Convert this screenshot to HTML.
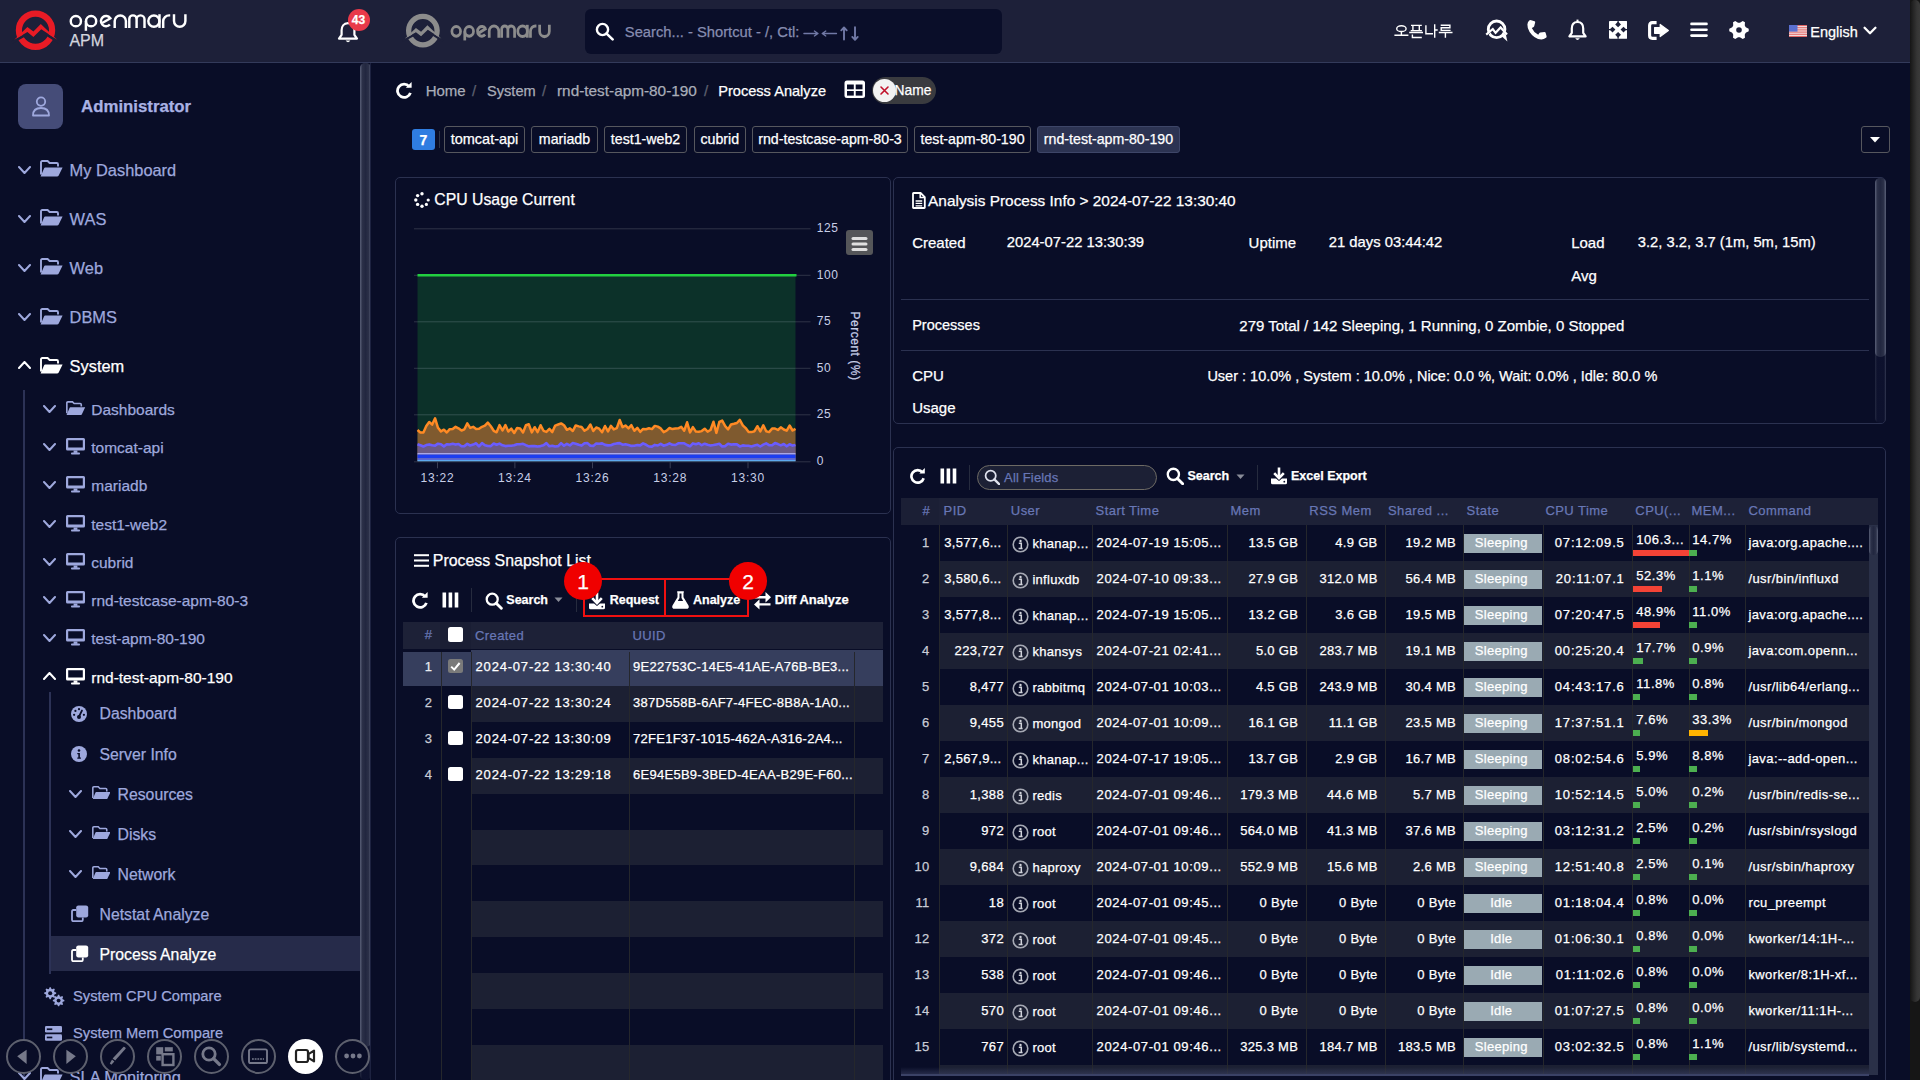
<!DOCTYPE html>
<html><head><meta charset="utf-8"><title>Process Analyze</title><style>
*{box-sizing:border-box}
html,body{margin:0;padding:0}
body{width:1920px;height:1080px;overflow:hidden;background:#090d27;font-family:"Liberation Sans",sans-serif;color:#fff;position:relative}
.a{position:absolute}
.nw{white-space:nowrap}
#hdr{left:0;top:0;width:1910px;height:63px;background:#1d2039;border-bottom:1px solid #333a5a}
#pscroll{left:1910px;top:0;width:10px;height:1080px;background:#161616}
#pthumb{left:1910px;top:0;width:10px;height:1002px;background:linear-gradient(90deg,#151515 0,#262626 35%,#353535 70%,#3a3a3a 100%);border-radius:5px}
#side{left:0;top:63px;width:370px;height:1017px;background:#090d27;overflow:hidden}
.sbthumb{background:linear-gradient(90deg,#4f556c 0,#2a2f47 25%,#232842 50%,#2a2f47 75%,#4f556c 100%);border-radius:5px}
.panel{border:1px solid #2b3150;border-radius:5px}
.t{font-size:15px;white-space:nowrap;line-height:1;-webkit-text-stroke:0.25px currentColor}

</style></head><body>
<div id="side" class="a"></div>
<div class="a" style="left:18px;top:84px;width:45px;height:45px;background:#454c78;border-radius:8px"></div>
<svg class="a" style="left:31px;top:96px;" width="20" height="21" viewBox="0 0 20 21"><circle cx="10" cy="5.6" r="4.2" fill="none" stroke="#9ea8dd" stroke-width="1.8"/><path d="M2,19.5 Q2,12 10,12 Q18,12 18,19.5 Z" fill="none" stroke="#9ea8dd" stroke-width="1.8" stroke-linejoin="round"/></svg>
<div class="a t" style="left:81.10px;top:98.88px;font-size:16.8px;color:#a9b2e4;font-weight:700;">Administrator</div>
<svg class="a" style="left:17.5px;top:165.7px;" width="13" height="8" viewBox="0 0 13 8"><polyline points="1,1 6.5,7 12,1" fill="none" stroke="#9ea8dd" stroke-width="2" stroke-linecap="round" stroke-linejoin="round"/></svg>
<svg class="a" style="left:40px;top:160.2px;" width="23.0" height="17.0" viewBox="0 0 23.0 17.0"><g transform="scale(1.0)" fill="#9ea8dd"><path d="M1,14.5 L1,2.3 Q1,1 2.3,1 L7.6,1 L9.6,3 L16.7,3 Q18,3 18,4.3 L18,6.6" fill="none" stroke="#9ea8dd" stroke-width="1.9"/><path d="M5.2,7.4 L22.6,7.4 L18.7,15.6 Q18.2,16.6 17,16.6 L0.6,16.6 L4,8.4 Q4.4,7.4 5.2,7.4 Z"/></g></svg>
<div class="a t" style="left:69.60px;top:161.82px;font-size:16.4px;color:#9ea8dd;">My Dashboard</div>
<svg class="a" style="left:17.5px;top:214.7px;" width="13" height="8" viewBox="0 0 13 8"><polyline points="1,1 6.5,7 12,1" fill="none" stroke="#9ea8dd" stroke-width="2" stroke-linecap="round" stroke-linejoin="round"/></svg>
<svg class="a" style="left:40px;top:209.2px;" width="23.0" height="17.0" viewBox="0 0 23.0 17.0"><g transform="scale(1.0)" fill="#9ea8dd"><path d="M1,14.5 L1,2.3 Q1,1 2.3,1 L7.6,1 L9.6,3 L16.7,3 Q18,3 18,4.3 L18,6.6" fill="none" stroke="#9ea8dd" stroke-width="1.9"/><path d="M5.2,7.4 L22.6,7.4 L18.7,15.6 Q18.2,16.6 17,16.6 L0.6,16.6 L4,8.4 Q4.4,7.4 5.2,7.4 Z"/></g></svg>
<div class="a t" style="left:69.60px;top:210.82px;font-size:16.4px;color:#9ea8dd;">WAS</div>
<svg class="a" style="left:17.5px;top:263.7px;" width="13" height="8" viewBox="0 0 13 8"><polyline points="1,1 6.5,7 12,1" fill="none" stroke="#9ea8dd" stroke-width="2" stroke-linecap="round" stroke-linejoin="round"/></svg>
<svg class="a" style="left:40px;top:258.2px;" width="23.0" height="17.0" viewBox="0 0 23.0 17.0"><g transform="scale(1.0)" fill="#9ea8dd"><path d="M1,14.5 L1,2.3 Q1,1 2.3,1 L7.6,1 L9.6,3 L16.7,3 Q18,3 18,4.3 L18,6.6" fill="none" stroke="#9ea8dd" stroke-width="1.9"/><path d="M5.2,7.4 L22.6,7.4 L18.7,15.6 Q18.2,16.6 17,16.6 L0.6,16.6 L4,8.4 Q4.4,7.4 5.2,7.4 Z"/></g></svg>
<div class="a t" style="left:69.60px;top:259.82px;font-size:16.4px;color:#9ea8dd;">Web</div>
<svg class="a" style="left:17.5px;top:313px;" width="13" height="8" viewBox="0 0 13 8"><polyline points="1,1 6.5,7 12,1" fill="none" stroke="#9ea8dd" stroke-width="2" stroke-linecap="round" stroke-linejoin="round"/></svg>
<svg class="a" style="left:40px;top:307.5px;" width="23.0" height="17.0" viewBox="0 0 23.0 17.0"><g transform="scale(1.0)" fill="#9ea8dd"><path d="M1,14.5 L1,2.3 Q1,1 2.3,1 L7.6,1 L9.6,3 L16.7,3 Q18,3 18,4.3 L18,6.6" fill="none" stroke="#9ea8dd" stroke-width="1.9"/><path d="M5.2,7.4 L22.6,7.4 L18.7,15.6 Q18.2,16.6 17,16.6 L0.6,16.6 L4,8.4 Q4.4,7.4 5.2,7.4 Z"/></g></svg>
<div class="a t" style="left:69.60px;top:309.12px;font-size:16.4px;color:#9ea8dd;">DBMS</div>
<svg class="a" style="left:17.5px;top:361px;" width="13" height="8" viewBox="0 0 13 8"><polyline points="1,7 6.5,1 12,7" fill="none" stroke="#fff" stroke-width="2" stroke-linecap="round" stroke-linejoin="round"/></svg>
<svg class="a" style="left:40px;top:356.5px;" width="23.0" height="17.0" viewBox="0 0 23.0 17.0"><g transform="scale(1.0)" fill="#fff"><path d="M1,14.5 L1,2.3 Q1,1 2.3,1 L7.6,1 L9.6,3 L16.7,3 Q18,3 18,4.3 L18,6.6" fill="none" stroke="#fff" stroke-width="1.9"/><path d="M5.2,7.4 L22.6,7.4 L18.7,15.6 Q18.2,16.6 17,16.6 L0.6,16.6 L4,8.4 Q4.4,7.4 5.2,7.4 Z"/></g></svg>
<div class="a t" style="left:69.60px;top:358.12px;font-size:16.4px;color:#fff;">System</div>
<div class="a" style="left:23px;top:389.5px;width:2px;height:700px;background:#2c3256"></div>
<svg class="a" style="left:42.8px;top:405px;" width="13" height="8" viewBox="0 0 13 8"><polyline points="1,1 6.5,7 12,1" fill="none" stroke="#9ea8dd" stroke-width="2" stroke-linecap="round" stroke-linejoin="round"/></svg>
<svg class="a" style="left:66px;top:400.5px;" width="19.55" height="14.45" viewBox="0 0 19.55 14.45"><g transform="scale(0.85)" fill="#9ea8dd"><path d="M1,14.5 L1,2.3 Q1,1 2.3,1 L7.6,1 L9.6,3 L16.7,3 Q18,3 18,4.3 L18,6.6" fill="none" stroke="#9ea8dd" stroke-width="1.9"/><path d="M5.2,7.4 L22.6,7.4 L18.7,15.6 Q18.2,16.6 17,16.6 L0.6,16.6 L4,8.4 Q4.4,7.4 5.2,7.4 Z"/></g></svg>
<div class="a t" style="left:91.25px;top:401.88px;font-size:15.5px;color:#9ea8dd;">Dashboards</div>
<svg class="a" style="left:42.8px;top:443.25px;" width="13" height="8" viewBox="0 0 13 8"><polyline points="1,1 6.5,7 12,1" fill="none" stroke="#9ea8dd" stroke-width="2" stroke-linecap="round" stroke-linejoin="round"/></svg>
<svg class="a" style="left:66.3px;top:438.25px;" width="19.0" height="17.0" viewBox="0 0 19.0 17.0"><g transform="scale(1.0)" fill="#9ea8dd"><path fill-rule="evenodd" d="M1.5,0 L17.5,0 Q19,0 19,1.5 L19,11 Q19,12.5 17.5,12.5 L1.5,12.5 Q0,12.5 0,11 L0,1.5 Q0,0 1.5,0 Z M2.2,2.2 L2.2,9.6 L16.8,9.6 L16.8,2.2 Z"/><rect x="7.6" y="12.5" width="3.8" height="2.4"/><rect x="5" y="14.6" width="9" height="2" rx="0.8"/></g></svg>
<div class="a t" style="left:91.25px;top:440.13px;font-size:15.5px;color:#9ea8dd;">tomcat-api</div>
<svg class="a" style="left:42.8px;top:481.25px;" width="13" height="8" viewBox="0 0 13 8"><polyline points="1,1 6.5,7 12,1" fill="none" stroke="#9ea8dd" stroke-width="2" stroke-linecap="round" stroke-linejoin="round"/></svg>
<svg class="a" style="left:66.3px;top:476.25px;" width="19.0" height="17.0" viewBox="0 0 19.0 17.0"><g transform="scale(1.0)" fill="#9ea8dd"><path fill-rule="evenodd" d="M1.5,0 L17.5,0 Q19,0 19,1.5 L19,11 Q19,12.5 17.5,12.5 L1.5,12.5 Q0,12.5 0,11 L0,1.5 Q0,0 1.5,0 Z M2.2,2.2 L2.2,9.6 L16.8,9.6 L16.8,2.2 Z"/><rect x="7.6" y="12.5" width="3.8" height="2.4"/><rect x="5" y="14.6" width="9" height="2" rx="0.8"/></g></svg>
<div class="a t" style="left:91.25px;top:478.13px;font-size:15.5px;color:#9ea8dd;">mariadb</div>
<svg class="a" style="left:42.8px;top:520px;" width="13" height="8" viewBox="0 0 13 8"><polyline points="1,1 6.5,7 12,1" fill="none" stroke="#9ea8dd" stroke-width="2" stroke-linecap="round" stroke-linejoin="round"/></svg>
<svg class="a" style="left:66.3px;top:515px;" width="19.0" height="17.0" viewBox="0 0 19.0 17.0"><g transform="scale(1.0)" fill="#9ea8dd"><path fill-rule="evenodd" d="M1.5,0 L17.5,0 Q19,0 19,1.5 L19,11 Q19,12.5 17.5,12.5 L1.5,12.5 Q0,12.5 0,11 L0,1.5 Q0,0 1.5,0 Z M2.2,2.2 L2.2,9.6 L16.8,9.6 L16.8,2.2 Z"/><rect x="7.6" y="12.5" width="3.8" height="2.4"/><rect x="5" y="14.6" width="9" height="2" rx="0.8"/></g></svg>
<div class="a t" style="left:91.25px;top:516.88px;font-size:15.5px;color:#9ea8dd;">test1-web2</div>
<svg class="a" style="left:42.8px;top:558px;" width="13" height="8" viewBox="0 0 13 8"><polyline points="1,1 6.5,7 12,1" fill="none" stroke="#9ea8dd" stroke-width="2" stroke-linecap="round" stroke-linejoin="round"/></svg>
<svg class="a" style="left:66.3px;top:553px;" width="19.0" height="17.0" viewBox="0 0 19.0 17.0"><g transform="scale(1.0)" fill="#9ea8dd"><path fill-rule="evenodd" d="M1.5,0 L17.5,0 Q19,0 19,1.5 L19,11 Q19,12.5 17.5,12.5 L1.5,12.5 Q0,12.5 0,11 L0,1.5 Q0,0 1.5,0 Z M2.2,2.2 L2.2,9.6 L16.8,9.6 L16.8,2.2 Z"/><rect x="7.6" y="12.5" width="3.8" height="2.4"/><rect x="5" y="14.6" width="9" height="2" rx="0.8"/></g></svg>
<div class="a t" style="left:91.25px;top:554.88px;font-size:15.5px;color:#9ea8dd;">cubrid</div>
<svg class="a" style="left:42.8px;top:596.25px;" width="13" height="8" viewBox="0 0 13 8"><polyline points="1,1 6.5,7 12,1" fill="none" stroke="#9ea8dd" stroke-width="2" stroke-linecap="round" stroke-linejoin="round"/></svg>
<svg class="a" style="left:66.3px;top:591.25px;" width="19.0" height="17.0" viewBox="0 0 19.0 17.0"><g transform="scale(1.0)" fill="#9ea8dd"><path fill-rule="evenodd" d="M1.5,0 L17.5,0 Q19,0 19,1.5 L19,11 Q19,12.5 17.5,12.5 L1.5,12.5 Q0,12.5 0,11 L0,1.5 Q0,0 1.5,0 Z M2.2,2.2 L2.2,9.6 L16.8,9.6 L16.8,2.2 Z"/><rect x="7.6" y="12.5" width="3.8" height="2.4"/><rect x="5" y="14.6" width="9" height="2" rx="0.8"/></g></svg>
<div class="a t" style="left:91.25px;top:593.13px;font-size:15.5px;color:#9ea8dd;">rnd-testcase-apm-80-3</div>
<svg class="a" style="left:42.8px;top:634.25px;" width="13" height="8" viewBox="0 0 13 8"><polyline points="1,1 6.5,7 12,1" fill="none" stroke="#9ea8dd" stroke-width="2" stroke-linecap="round" stroke-linejoin="round"/></svg>
<svg class="a" style="left:66.3px;top:629.25px;" width="19.0" height="17.0" viewBox="0 0 19.0 17.0"><g transform="scale(1.0)" fill="#9ea8dd"><path fill-rule="evenodd" d="M1.5,0 L17.5,0 Q19,0 19,1.5 L19,11 Q19,12.5 17.5,12.5 L1.5,12.5 Q0,12.5 0,11 L0,1.5 Q0,0 1.5,0 Z M2.2,2.2 L2.2,9.6 L16.8,9.6 L16.8,2.2 Z"/><rect x="7.6" y="12.5" width="3.8" height="2.4"/><rect x="5" y="14.6" width="9" height="2" rx="0.8"/></g></svg>
<div class="a t" style="left:91.25px;top:631.13px;font-size:15.5px;color:#9ea8dd;">test-apm-80-190</div>
<svg class="a" style="left:42.8px;top:672px;" width="13" height="8" viewBox="0 0 13 8"><polyline points="1,7 6.5,1 12,7" fill="none" stroke="#fff" stroke-width="2" stroke-linecap="round" stroke-linejoin="round"/></svg>
<svg class="a" style="left:66.3px;top:668px;" width="19.0" height="17.0" viewBox="0 0 19.0 17.0"><g transform="scale(1.0)" fill="#fff"><path fill-rule="evenodd" d="M1.5,0 L17.5,0 Q19,0 19,1.5 L19,11 Q19,12.5 17.5,12.5 L1.5,12.5 Q0,12.5 0,11 L0,1.5 Q0,0 1.5,0 Z M2.2,2.2 L2.2,9.6 L16.8,9.6 L16.8,2.2 Z"/><rect x="7.6" y="12.5" width="3.8" height="2.4"/><rect x="5" y="14.6" width="9" height="2" rx="0.8"/></g></svg>
<div class="a t" style="left:91.25px;top:669.88px;font-size:15.5px;color:#fff;">rnd-test-apm-80-190</div>
<div class="a" style="left:49px;top:692px;width:2px;height:282px;background:#2c3256"></div>
<svg class="a" style="left:71.3px;top:706px;" width="16" height="16" viewBox="0 0 16 16"><circle cx="8" cy="8" r="8" fill="#9ea8dd"/><circle cx="8" cy="3.2" r="1.1" fill="#090d27"/><circle cx="4.4" cy="4.9" r="1.1" fill="#090d27"/><circle cx="3.1" cy="8.8" r="1.1" fill="#090d27"/><circle cx="12.9" cy="8.8" r="1.1" fill="#090d27"/><path d="M8,10.5 L11,4.5" stroke="#090d27" stroke-width="1.7" stroke-linecap="round"/><circle cx="8" cy="11" r="2" fill="#090d27"/></svg>
<div class="a t" style="left:99.50px;top:706.13px;font-size:15.8px;color:#9ea8dd;">Dashboard</div>
<svg class="a" style="left:71.3px;top:746px;" width="16" height="16" viewBox="0 0 16 16"><circle cx="8" cy="8" r="8" fill="#9ea8dd"/><circle cx="8" cy="4.5" r="1.3" fill="#090d27"/><path d="M6.3,6.9 L8.9,6.9 L8.9,11.4 L9.9,11.4 L9.9,12.7 L6.3,12.7 L6.3,11.4 L7.3,11.4 L7.3,8.2 L6.3,8.2 Z" fill="#090d27"/></svg>
<div class="a t" style="left:99.50px;top:746.63px;font-size:15.8px;color:#9ea8dd;">Server Info</div>
<svg class="a" style="left:69.2px;top:790px;" width="13" height="8" viewBox="0 0 13 8"><polyline points="1,1 6.5,7 12,1" fill="none" stroke="#9ea8dd" stroke-width="2" stroke-linecap="round" stroke-linejoin="round"/></svg>
<svg class="a" style="left:91.5px;top:785.5px;" width="18.86" height="13.94" viewBox="0 0 18.86 13.94"><g transform="scale(0.82)" fill="#9ea8dd"><path d="M1,14.5 L1,2.3 Q1,1 2.3,1 L7.6,1 L9.6,3 L16.7,3 Q18,3 18,4.3 L18,6.6" fill="none" stroke="#9ea8dd" stroke-width="1.9"/><path d="M5.2,7.4 L22.6,7.4 L18.7,15.6 Q18.2,16.6 17,16.6 L0.6,16.6 L4,8.4 Q4.4,7.4 5.2,7.4 Z"/></g></svg>
<div class="a t" style="left:117.50px;top:786.63px;font-size:15.8px;color:#9ea8dd;">Resources</div>
<svg class="a" style="left:69.2px;top:830px;" width="13" height="8" viewBox="0 0 13 8"><polyline points="1,1 6.5,7 12,1" fill="none" stroke="#9ea8dd" stroke-width="2" stroke-linecap="round" stroke-linejoin="round"/></svg>
<svg class="a" style="left:91.5px;top:825.5px;" width="18.86" height="13.94" viewBox="0 0 18.86 13.94"><g transform="scale(0.82)" fill="#9ea8dd"><path d="M1,14.5 L1,2.3 Q1,1 2.3,1 L7.6,1 L9.6,3 L16.7,3 Q18,3 18,4.3 L18,6.6" fill="none" stroke="#9ea8dd" stroke-width="1.9"/><path d="M5.2,7.4 L22.6,7.4 L18.7,15.6 Q18.2,16.6 17,16.6 L0.6,16.6 L4,8.4 Q4.4,7.4 5.2,7.4 Z"/></g></svg>
<div class="a t" style="left:117.50px;top:826.63px;font-size:15.8px;color:#9ea8dd;">Disks</div>
<svg class="a" style="left:69.2px;top:870px;" width="13" height="8" viewBox="0 0 13 8"><polyline points="1,1 6.5,7 12,1" fill="none" stroke="#9ea8dd" stroke-width="2" stroke-linecap="round" stroke-linejoin="round"/></svg>
<svg class="a" style="left:91.5px;top:865.5px;" width="18.86" height="13.94" viewBox="0 0 18.86 13.94"><g transform="scale(0.82)" fill="#9ea8dd"><path d="M1,14.5 L1,2.3 Q1,1 2.3,1 L7.6,1 L9.6,3 L16.7,3 Q18,3 18,4.3 L18,6.6" fill="none" stroke="#9ea8dd" stroke-width="1.9"/><path d="M5.2,7.4 L22.6,7.4 L18.7,15.6 Q18.2,16.6 17,16.6 L0.6,16.6 L4,8.4 Q4.4,7.4 5.2,7.4 Z"/></g></svg>
<div class="a t" style="left:117.50px;top:866.63px;font-size:15.8px;color:#9ea8dd;">Network</div>
<svg class="a" style="left:71px;top:905px;" width="18" height="17" viewBox="0 0 18 17"><path d="M5.2,5 L2.4,5 Q1,5 1,6.4 L1,14.8 Q1,16.2 2.4,16.2 L10.4,16.2 Q11.8,16.2 11.8,14.8 L11.8,12.6" fill="none" stroke="#9ea8dd" stroke-width="1.8"/><rect x="5.2" y="0.4" width="12" height="12" rx="2.2" fill="#9ea8dd"/></svg>
<div class="a t" style="left:99.50px;top:906.63px;font-size:15.8px;color:#9ea8dd;">Netstat Analyze</div>
<div class="a" style="left:51px;top:936px;width:309px;height:34.5px;background:#262b4a"></div>
<svg class="a" style="left:71px;top:945px;" width="18" height="17" viewBox="0 0 18 17"><path d="M5.2,5 L2.4,5 Q1,5 1,6.4 L1,14.8 Q1,16.2 2.4,16.2 L10.4,16.2 Q11.8,16.2 11.8,14.8 L11.8,12.6" fill="none" stroke="#fff" stroke-width="1.8"/><rect x="5.2" y="0.4" width="12" height="12" rx="2.2" fill="#fff"/></svg>
<div class="a t" style="left:99.50px;top:946.63px;font-size:15.8px;color:#fff;">Process Analyze</div>
<svg class="a" style="left:43.5px;top:987px;" width="21" height="20" viewBox="0 0 21 20"><polygon points="12.17,5.61 12.17,6.79 10.45,7.49 10.12,8.29 10.84,10.01 10.01,10.84 8.29,10.12 7.49,10.45 6.79,12.17 5.61,12.17 4.91,10.45 4.11,10.12 2.39,10.84 1.56,10.01 2.28,8.29 1.95,7.49 0.23,6.79 0.23,5.61 1.95,4.91 2.28,4.11 1.56,2.39 2.39,1.56 4.11,2.28 4.91,1.95 5.61,0.23 6.79,0.23 7.49,1.95 8.29,2.28 10.01,1.56 10.84,2.39 10.12,4.11 10.45,4.91" fill="#9ea8dd"/><circle cx="6.2" cy="6.2" r="2.04" fill="#090d27"/><polygon points="20.37,13.03 20.37,14.17 18.71,14.85 18.39,15.62 19.08,17.28 18.28,18.08 16.62,17.39 15.85,17.71 15.17,19.37 14.03,19.37 13.35,17.71 12.58,17.39 10.92,18.08 10.12,17.28 10.81,15.62 10.49,14.85 8.83,14.17 8.83,13.03 10.49,12.35 10.81,11.58 10.12,9.92 10.92,9.12 12.58,9.81 13.35,9.49 14.03,7.83 15.17,7.83 15.85,9.49 16.62,9.81 18.28,9.12 19.08,9.92 18.39,11.58 18.71,12.35" fill="#9ea8dd"/><circle cx="14.6" cy="13.6" r="1.97" fill="#090d27"/></svg>
<div class="a t" style="left:73.00px;top:988.81px;font-size:14.7px;color:#9ea8dd;">System CPU Compare</div>
<svg class="a" style="left:45px;top:1026px;" width="17" height="15" viewBox="0 0 17 15"><rect x="0" y="0" width="17" height="6.5" rx="1.3" fill="#9ea8dd"/><rect x="0" y="8.2" width="17" height="6.5" rx="1.3" fill="#9ea8dd"/><rect x="1.8" y="2.4" width="5.5" height="1.7" fill="#090d27"/><rect x="1.8" y="10.6" width="5.5" height="1.7" fill="#090d27"/></svg>
<div class="a t" style="left:73.00px;top:1026.31px;font-size:14.7px;color:#9ea8dd;">System Mem Compare</div>
<svg class="a" style="left:17.5px;top:1071.5px;" width="13" height="8" viewBox="0 0 13 8"><polyline points="1,1 6.5,7 12,1" fill="none" stroke="#9ea8dd" stroke-width="2" stroke-linecap="round" stroke-linejoin="round"/></svg>
<svg class="a" style="left:40px;top:1066.5px;" width="23.0" height="17.0" viewBox="0 0 23.0 17.0"><g transform="scale(1.0)" fill="#9ea8dd"><path d="M1,14.5 L1,2.3 Q1,1 2.3,1 L7.6,1 L9.6,3 L16.7,3 Q18,3 18,4.3 L18,6.6" fill="none" stroke="#9ea8dd" stroke-width="1.9"/><path d="M5.2,7.4 L22.6,7.4 L18.7,15.6 Q18.2,16.6 17,16.6 L0.6,16.6 L4,8.4 Q4.4,7.4 5.2,7.4 Z"/></g></svg>
<div class="a t" style="left:69.60px;top:1068.62px;font-size:16.4px;color:#9ea8dd;">SLA Monitoring</div>
<div class="a" style="left:360px;top:63px;width:10.5px;height:1017px;background:linear-gradient(90deg,#30354c 0,#0f1330 20%,#0f1330 80%,#30354c 100%);border-radius:5px;opacity:.7"></div>
<div class="a" style="left:360px;top:63px;width:10.5px;height:984px;background:linear-gradient(90deg,#5a6078 0,#2b3048 22%,#222740 50%,#2b3048 78%,#5a6078 100%);border-radius:5px"></div>
<div class="a" style="left:370px;top:63px;width:1px;height:1017px;background:#1d2240"></div>
<div class="a" style="left:6.25px;top:1038.75px;width:35px;height:35px;border:2px solid #5d606e;border-radius:50%;background:#090d27"></div>
<div class="a" style="left:52.5px;top:1038.75px;width:35px;height:35px;border:2px solid #5d606e;border-radius:50%;background:#090d27"></div>
<div class="a" style="left:100.0px;top:1038.75px;width:35px;height:35px;border:2px solid #5d606e;border-radius:50%;background:#090d27"></div>
<div class="a" style="left:147.0px;top:1038.75px;width:35px;height:35px;border:2px solid #5d606e;border-radius:50%;background:#090d27"></div>
<div class="a" style="left:193.75px;top:1038.75px;width:35px;height:35px;border:2px solid #5d606e;border-radius:50%;background:#090d27"></div>
<div class="a" style="left:240.75px;top:1038.75px;width:35px;height:35px;border:2px solid #5d606e;border-radius:50%;background:#090d27"></div>
<div class="a" style="left:287.5px;top:1038.75px;width:35px;height:35px;background:#fff;border-radius:50%"></div>
<div class="a" style="left:335.0px;top:1038.75px;width:35px;height:35px;border:2px solid #5d606e;border-radius:50%;background:#090d27"></div>
<svg class="a" style="left:13px;top:1046px;" width="20" height="20" viewBox="0 0 20 20"><path d="M4.2,10.2 L13.6,3.8 L13.6,18 Z" fill="#76798a"/></svg>
<svg class="a" style="left:60px;top:1046px;" width="20" height="20" viewBox="0 0 20 20"><path d="M15.8,10.2 L6.4,3.8 L6.4,18 Z" fill="#76798a"/></svg>
<svg class="a" style="left:106px;top:1045px;" width="22" height="22" viewBox="0 0 22 22"><path d="M17.6,1.8 Q19.4,1.6 19.8,3.6 L9.2,15.6 L6.6,13.6 Z" fill="#76798a"/><path d="M6,14.6 L8.4,16.4 L5.4,19.8 L3.8,18.6 Z" fill="#76798a"/></svg>
<svg class="a" style="left:153px;top:1045px;" width="22" height="22" viewBox="0 0 22 22"><rect x="3.2" y="2.2" width="7" height="7.2" fill="#76798a"/><rect x="3.2" y="10.8" width="4.6" height="4.8" fill="#76798a"/><rect x="11.8" y="2.2" width="8" height="4.2" fill="#76798a"/><rect x="9.6" y="9.2" width="10.8" height="10.8" fill="none" stroke="#76798a" stroke-width="2.4"/></svg>
<svg class="a" style="left:200px;top:1045px;" width="22" height="22" viewBox="0 0 22 22"><circle cx="9" cy="9" r="6.2" fill="none" stroke="#76798a" stroke-width="2.8"/><path d="M13.6,13.6 L19.4,19.4" stroke="#76798a" stroke-width="3.4" stroke-linecap="round"/></svg>
<svg class="a" style="left:247px;top:1045px;" width="22" height="22" viewBox="0 0 22 22"><rect x="2" y="4.4" width="18" height="13.6" rx="1.6" fill="none" stroke="#76798a" stroke-width="1.9"/><path d="M5,14 H17" stroke="#76798a" stroke-width="1.5" stroke-dasharray="1.8,0.9"/></svg>
<svg class="a" style="left:294px;top:1045px;" width="22" height="22" viewBox="0 0 22 22"><rect x="2" y="5" width="12" height="12" rx="2" fill="none" stroke="#222" stroke-width="2.2"/><path d="M14.5,9.2 L20,5.6 L20,16.4 L14.5,12.8 Z" fill="none" stroke="#222" stroke-width="2.2" stroke-linejoin="round"/></svg>
<svg class="a" style="left:341.5px;top:1045px;" width="22" height="22" viewBox="0 0 22 22"><circle cx="4.6" cy="11" r="2.4" fill="#76798a"/><circle cx="11" cy="11" r="2.4" fill="#76798a"/><circle cx="17.4" cy="11" r="2.4" fill="#76798a"/></svg>
<div id="hdr" class="a"></div>
<svg class="a" style="left:10px;top:5px;" width="50" height="50" viewBox="0 0 50 50"><circle cx="25.5" cy="25.2" r="16.6" fill="none" stroke="#e81b25" stroke-width="6.2"/>
<polyline points="2,37.4 17.4,28.9 23.4,33.7 31.25,26.1 49,37.4" fill="none" stroke="#1d2039" stroke-width="2.6"/>
<polygon points="4.3,34.7 17.4,22 23.4,26.4 30.8,19 47.2,34.7 31.25,24.3 23.4,31.9 17.4,27.1" fill="#e81b25"/></svg>
<svg class="a" style="left:65px;top:8px;" width="125" height="26" viewBox="0 0 125 26"><g fill="none" stroke="#ffffff" stroke-width="2.45" stroke-linecap="butt">
<circle cx="10.85" cy="13.15" r="5.1"/>
<circle cx="26.1" cy="13.15" r="5.1"/><path d="M20.9,13.15 V22.8"/>
<path d="M45.18,10.22 A5.1,5.1 0 1 0 44.9,16.43"/><path d="M37.2,15.0 L46.4,9.8"/>
<path d="M49.7,19.9 V13.0 A5.6,5.6 0 0 1 60.9,13.0 V19.9"/>
<path d="M64.3,19.9 V11.0 A3.65,3.65 0 0 1 71.6,11.0 V19.9 M71.6,11.3 A3.95,3.95 0 0 1 79.5,11.3 V19.9"/>
<circle cx="88.9" cy="13.1" r="5.6"/><path d="M94.5,6.2 V19.9"/>
<path d="M98.2,19.9 V13.35 A6,6 0 0 1 104.2,7.35 H105.2"/>
<path d="M109,6.2 V13.05 A5.7,5.7 0 0 0 120.4,13.05 V6.2"/>
</g></svg>
<div class="a t" style="left:69.40px;top:32.76px;font-size:16px;color:#d3d5de;">APM</div>
<svg class="a" style="left:337px;top:20px;" width="22" height="25" viewBox="0 0 22 25"><path d="M11,3.2 C6.6,3.2 4.6,6.6 4.6,10.3 L4.6,14.8 L2,18.6 L20,18.6 L17.4,14.8 L17.4,10.3 C17.4,6.6 15.4,3.2 11,3.2 Z" fill="none" stroke="#fff" stroke-width="2.2" stroke-linejoin="round"/><path d="M8.6,20.6 Q11,24 13.4,20.6 Z" fill="#fff"/></svg>
<div class="a" style="left:347.5px;top:8.5px;width:22px;height:22px;background:#e8394a;border-radius:11px"></div>
<div class="a t" style="left:58.50px;width:600px;text-align:center;top:14.44px;font-size:12px;color:#fff;font-weight:700;">43</div>
<svg class="a" style="left:401.1px;top:9.28px;" width="43" height="43" viewBox="0 0 43 43"><g transform="scale(0.858)"><circle cx="25.5" cy="25.2" r="16.6" fill="none" stroke="#8c8c8c" stroke-width="6.2"/>
<polyline points="2,37.4 17.4,28.9 23.4,33.7 31.25,26.1 49,37.4" fill="none" stroke="#1d2039" stroke-width="2.6"/>
<polygon points="4.3,34.7 17.4,22 23.4,26.4 30.8,19 47.2,34.7 31.25,24.3 23.4,31.9 17.4,27.1" fill="#8c8c8c"/></g></svg>
<svg class="a" style="left:447.4px;top:19.2px;" width="110" height="26" viewBox="0 0 110 26"><g transform="scale(0.85,0.94)"><g fill="none" stroke="#8c8c8c" stroke-width="3.2" stroke-linecap="butt">
<circle cx="10.85" cy="13.15" r="5.1"/>
<circle cx="26.1" cy="13.15" r="5.1"/><path d="M20.9,13.15 V22.8"/>
<path d="M45.18,10.22 A5.1,5.1 0 1 0 44.9,16.43"/><path d="M37.2,15.0 L46.4,9.8"/>
<path d="M49.7,19.9 V13.0 A5.6,5.6 0 0 1 60.9,13.0 V19.9"/>
<path d="M64.3,19.9 V11.0 A3.65,3.65 0 0 1 71.6,11.0 V19.9 M71.6,11.3 A3.95,3.95 0 0 1 79.5,11.3 V19.9"/>
<circle cx="88.9" cy="13.1" r="5.6"/><path d="M94.5,6.2 V19.9"/>
<path d="M98.2,19.9 V13.35 A6,6 0 0 1 104.2,7.35 H105.2"/>
<path d="M109,6.2 V13.05 A5.7,5.7 0 0 0 120.4,13.05 V6.2"/>
</g></g></svg>
<div class="a" style="left:585px;top:9px;width:417px;height:45px;background:#0a0e29;border-radius:6px"></div>
<svg class="a" style="left:595px;top:22px;" width="20" height="19" viewBox="0 0 20 19"><circle cx="7.5" cy="7.5" r="5.6" fill="none" stroke="#fff" stroke-width="2.4"/><path d="M11.6,11.6 L17.6,17.4" stroke="#fff" stroke-width="2.6" stroke-linecap="round"/></svg>
<div class="a t" style="left:624.80px;top:24.71px;font-size:14.75px;color:#868cb0;">Search... - Shortcut - /, Ctl:</div>
<svg class="a" style="left:800px;top:24px;" width="60" height="18" viewBox="0 0 60 18"><g fill="none" stroke="#7179a6" stroke-width="1.3" stroke-linecap="round" stroke-linejoin="round"><path d="M3.9,9.5 H18 M14.4,7 L18,9.5 L14.4,12"/><path d="M22.2,9.5 H36.5 M25.8,7 L22.2,9.5 L25.8,12"/></g><g fill="none" stroke="#7179a6" stroke-width="1.9" stroke-linecap="round" stroke-linejoin="round"><path d="M44,3.6 V15.6 M41.3,6.3 L44,3.4 L46.7,6.3"/><path d="M55,3.2 V15.6 M52.3,12.9 L55,15.8 L57.7,12.9"/></g></svg>
<svg class="a" style="left:0px;top:0px;" width="1460" height="45" viewBox="0 0 1460 45"><g fill="none" stroke="#fff" stroke-width="1.4">
<ellipse cx="1401.4" cy="28.65" rx="4.7" ry="2.9"/>
<path d="M1401.4,31.6 V35.2 M1394.4,35.3 H1408.4"/>
<path d="M1411,25.4 H1421.8 M1412.9,25.4 V30.6 M1419.3,25.4 V30.6 M1410.7,30.6 H1421.9 M1409.2,32.5 H1423 M1412.4,34.4 V37.5 H1421.8"/>
<path d="M1425.9,25.3 V33.75 H1433 M1434.7,24.2 V37.7 M1434.7,30 H1437.7"/>
<path d="M1440.7,25.3 H1449.9 V27.8 H1441.2 V30.4 H1450.6 M1438.8,32.5 H1452.5 M1445.4,32.5 V37.7"/>
</g></svg>
<svg class="a" style="left:1484px;top:17px;" width="26" height="27" viewBox="0 0 26 27"><circle cx="12.6" cy="12.3" r="8.3" fill="none" stroke="#fff" stroke-width="2.9"/><polyline points="1.5,19.6 8.8,12 11.6,15.8 16.6,10.4 24.5,19.6" fill="none" stroke="#1d2039" stroke-width="1.6"/><polyline points="2.2,17.6 8.8,12 11.6,15.8 16.6,10.4 23,17.6" fill="none" stroke="#fff" stroke-width="2.2" stroke-linejoin="miter"/><path d="M16.8,18.6 L23.4,24.6 L21.6,16.6 Z" fill="#fff"/></svg>
<svg class="a" style="left:1526px;top:19px;" width="22" height="22" viewBox="0 0 22 22"><path d="M5.2,1.2 L8.6,2.2 Q9.4,2.5 9.2,3.3 L8.2,7.2 Q8,7.8 7.3,8.2 L5.8,9 Q7.8,13.6 12.2,15.8 L13.2,14.3 Q13.6,13.7 14.3,13.6 L18.5,13 Q19.4,13 19.6,13.8 L20.6,17.2 Q20.8,18.2 20,18.8 Q17.8,20.6 15.4,20.6 Q8.4,20.2 3.6,13 Q1.2,9 1.4,5.4 Q1.6,3 3.2,1.6 Q4.1,0.9 5.2,1.2 Z" fill="#fff"/></svg>
<svg class="a" style="left:1567px;top:19.3px;" width="21" height="23" viewBox="0 0 21 23"><path d="M10.5,3 C6.6,3 4.8,6 4.8,9.6 L4.8,13.8 L2.4,17.4 L18.6,17.4 L16.2,13.8 L16.2,9.6 C16.2,6 14.4,3 10.5,3 Z" fill="none" stroke="#fff" stroke-width="2.2" stroke-linejoin="round"/><path d="M8.2,19.2 Q10.5,22.6 12.8,19.2 Z" fill="#fff"/><rect x="9.5" y="0.6" width="2" height="3" fill="#fff"/></svg>
<svg class="a" style="left:1609px;top:21px;" width="18.2" height="17.8" viewBox="0 0 18.2 17.8"><rect x="0" y="0" width="18.2" height="17.8" rx="0.8" fill="#fff"/><polygon points="9.1,0.5 12.0,3.4 9.1,6.3 6.199999999999999,3.4" fill="#1d2039"/><polygon points="3.5,5.699999999999999 6.4,8.6 3.5,11.5 0.6000000000000001,8.6" fill="#1d2039"/><polygon points="14.5,5.699999999999999 17.4,8.6 14.5,11.5 11.6,8.6" fill="#1d2039"/><polygon points="9.1,10.9 12.0,13.8 9.1,16.7 6.199999999999999,13.8" fill="#1d2039"/><rect x="8.5" y="0" width="1.2" height="2" fill="#1d2039"/><rect x="8.5" y="15.2" width="1.2" height="2.6" fill="#1d2039"/><rect x="0" y="8" width="2" height="1.2" fill="#1d2039"/><rect x="16" y="8" width="2.2" height="1.2" fill="#1d2039"/></svg>
<svg class="a" style="left:1648px;top:20.5px;" width="22" height="19" viewBox="0 0 22 19"><path d="M8.6,1.6 L4.4,1.6 Q1.6,1.6 1.6,4.4 L1.6,14.6 Q1.6,17.4 4.4,17.4 L8.6,17.4" fill="none" stroke="#fff" stroke-width="3.1"/><path d="M6.6,6.5 L12.2,6.5 L12.2,3.4 L20.4,9.5 L12.2,15.6 L12.2,12.3 L6.6,12.3 Z" fill="#fff" stroke="#fff" stroke-width="1.2" stroke-linejoin="round"/></svg>
<svg class="a" style="left:1689px;top:21px;" width="20" height="18" viewBox="0 0 20 18"><g stroke="#fff" stroke-width="2.6" stroke-linecap="round"><path d="M2.5,2.9 H17.5"/><path d="M2.5,8.7 H17.5"/><path d="M2.5,14.6 H17.5"/></g></svg>
<svg class="a" style="left:1728.4px;top:18.6px;" width="22" height="22" viewBox="0 0 22 22"><polygon points="20.72,9.72 20.72,12.28 17.70,13.78 16.75,15.41 16.97,18.77 14.75,20.05 11.95,18.19 10.05,18.19 7.25,20.05 5.03,18.77 5.25,15.41 4.30,13.78 1.28,12.28 1.28,9.72 4.30,8.22 5.25,6.59 5.03,3.23 7.25,1.95 10.05,3.81 11.95,3.81 14.75,1.95 16.97,3.23 16.75,6.59 17.70,8.22" fill="#fff"/><circle cx="11" cy="11" r="3.33" fill="#1d2039"/><circle cx="11" cy="11" r="6.9" fill="#fff"/><circle cx="11" cy="11" r="2.8" fill="#1d2039"/></svg>
<svg class="a" style="left:1788.5px;top:25.3px;" width="18.5" height="12" viewBox="0 0 18.5 12"><rect x="0" y="0" width="18.5" height="12" fill="#f3f3f3"/><rect x="0" y="0.00" width="18.5" height="0.92" fill="#e05a5a"/><rect x="0" y="1.85" width="18.5" height="0.92" fill="#e05a5a"/><rect x="0" y="3.69" width="18.5" height="0.92" fill="#e05a5a"/><rect x="0" y="5.54" width="18.5" height="0.92" fill="#e05a5a"/><rect x="0" y="7.38" width="18.5" height="0.92" fill="#e05a5a"/><rect x="0" y="9.23" width="18.5" height="0.92" fill="#e05a5a"/><rect x="0" y="11.08" width="18.5" height="0.92" fill="#e05a5a"/><rect x="0" y="0" width="8.5" height="6.6" fill="#5a6fd0"/></svg>
<div class="a t" style="left:1810.30px;top:25.23px;font-size:14.5px;color:#fff;">English</div>
<svg class="a" style="left:1862.5px;top:26px;" width="14" height="10" viewBox="0 0 14 10"><polyline points="1.6,1.8 7,7.2 12.4,1.8" fill="none" stroke="#fff" stroke-width="2.3" stroke-linecap="round" stroke-linejoin="round"/></svg>
<div id="pscroll" class="a"></div><div id="pthumb" class="a"></div>
<svg class="a" style="left:395.5px;top:81.5px;" width="17.0" height="17.0" viewBox="0 0 17.0 17.0"><g transform="scale(1.0)"><path d="M13.2,4.6 A6.6,6.6 0 1 0 14.4,10.8" fill="none" stroke="#fff" stroke-width="2.8"/><path d="M9.8,5.8 L15.6,5.8 L15.6,0 Z" fill="#fff"/></g></svg>
<div class="a t" style="left:425.70px;top:83.30px;font-size:15px;color:#a9adb9;">Home</div>
<div class="a t" style="left:472.00px;top:83.30px;font-size:15px;color:#5d6070;">/</div>
<div class="a t" style="left:487.00px;top:83.64px;font-size:14.6px;color:#a9adb9;">System</div>
<div class="a t" style="left:542.00px;top:83.30px;font-size:15px;color:#5d6070;">/</div>
<div class="a t" style="left:557.00px;top:83.01px;font-size:15.35px;color:#a9adb9;">rnd-test-apm-80-190</div>
<div class="a t" style="left:704.00px;top:83.30px;font-size:15px;color:#5d6070;">/</div>
<div class="a t" style="left:718.20px;top:83.64px;font-size:14.6px;color:#fff;">Process Analyze</div>
<svg class="a" style="left:843.5px;top:80px;" width="22" height="19" viewBox="0 0 22 19"><rect x="0.5" y="0.5" width="20.5" height="17.5" rx="2.5" fill="#fff"/><rect x="3" y="4.5" width="6.8" height="4.8" fill="#090d27"/><rect x="11.7" y="4.5" width="6.8" height="4.8" fill="#090d27"/><rect x="3" y="11" width="6.8" height="4.6" fill="#090d27"/><rect x="11.7" y="11" width="6.8" height="4.6" fill="#090d27"/></svg>
<div class="a" style="left:871.5px;top:77.3px;width:64.5px;height:26.5px;background:#3a3b3f;border-radius:13.5px"></div>
<div class="a t" style="left:894.50px;top:84.32px;font-size:13.8px;color:#fff;">Name</div>
<div class="a" style="left:873px;top:79px;width:23.2px;height:23.2px;background:#f2f2f2;border-radius:50%"></div>
<svg class="a" style="left:879px;top:85px;" width="11" height="11" viewBox="0 0 11 11"><path d="M2,2 L9,9 M9,2 L2,9" stroke="#c0102a" stroke-width="1.6" stroke-linecap="round"/></svg>
<div class="a" style="left:412px;top:129px;width:23px;height:20.6px;background:#2f7de1;border-radius:3px"></div>
<div class="a t" style="left:123.50px;width:600px;text-align:center;top:133.15px;font-size:14px;color:#fff;font-weight:700;">7</div>
<div class="a" style="left:439px;top:131px;width:1px;height:17px;background:#2e3346"></div>
<div class="a" style="left:444px;top:126px;width:81px;height:27px;border:1px solid #56575e;border-radius:3px"></div>
<div class="a t" style="left:184.50px;width:600px;text-align:center;top:132.23px;font-size:14.5px;color:#fff;">tomcat-api</div>
<div class="a" style="left:531px;top:126px;width:67px;height:27px;border:1px solid #56575e;border-radius:3px"></div>
<div class="a t" style="left:264.50px;width:600px;text-align:center;top:132.48px;font-size:14.2px;color:#fff;">mariadb</div>
<div class="a" style="left:604px;top:126px;width:83px;height:27px;border:1px solid #56575e;border-radius:3px"></div>
<div class="a t" style="left:345.50px;width:600px;text-align:center;top:132.48px;font-size:14.2px;color:#fff;">test1-web2</div>
<div class="a" style="left:693.5px;top:126px;width:52.5px;height:27px;border:1px solid #56575e;border-radius:3px"></div>
<div class="a t" style="left:419.75px;width:600px;text-align:center;top:132.48px;font-size:14.2px;color:#fff;">cubrid</div>
<div class="a" style="left:752px;top:126px;width:156px;height:27px;border:1px solid #56575e;border-radius:3px"></div>
<div class="a t" style="left:530.00px;width:600px;text-align:center;top:132.48px;font-size:14.2px;color:#fff;">rnd-testcase-apm-80-3</div>
<div class="a" style="left:914px;top:126px;width:117px;height:27px;border:1px solid #56575e;border-radius:3px"></div>
<div class="a t" style="left:672.50px;width:600px;text-align:center;top:132.48px;font-size:14.2px;color:#fff;">test-apm-80-190</div>
<div class="a" style="left:1037px;top:126px;width:143px;height:27px;background:#2c3352;border:1px solid #3e4668;border-radius:3px"></div>
<div class="a t" style="left:808.50px;width:600px;text-align:center;top:132.48px;font-size:14.2px;color:#fff;">rnd-test-apm-80-190</div>
<div class="a" style="left:1861px;top:126px;width:29px;height:27px;border:1px solid #56575e;border-radius:3px"></div>
<svg class="a" style="left:1869px;top:136px;" width="12" height="8" viewBox="0 0 12 8"><path d="M1,1 L11,1 L6,6.5 Z" fill="#fff"/></svg>
<div class="a" style="left:395px;top:177px;width:496px;height:337px;border:1px solid #2b3150;border-radius:5px"></div>
<svg class="a" style="left:413.5px;top:192px;" width="17" height="17" viewBox="0 0 17 17"><circle cx="8.00" cy="1.80" r="1.7" fill="#fff"/><circle cx="14.20" cy="8.00" r="1.6" fill="#fff"/><circle cx="12.38" cy="12.38" r="1.6" fill="#fff"/><circle cx="8.00" cy="14.20" r="1.7" fill="#fff"/><circle cx="3.62" cy="12.38" r="1.7" fill="#fff"/><circle cx="1.80" cy="8.00" r="1.7" fill="#fff"/><circle cx="3.62" cy="3.62" r="1.7" fill="#fff"/></svg>
<div class="a t" style="left:434.30px;top:192.33px;font-size:15.8px;color:#fff;">CPU Usage Current</div>
<svg class="a" style="left:0px;top:0px;pointer-events:none" width="1920" height="1080" viewBox="0 0 1920 1080"><line x1="414" y1="414.8" x2="810.5" y2="414.8" stroke="#2f3448" stroke-width="1"/><line x1="414" y1="368.3" x2="810.5" y2="368.3" stroke="#2f3448" stroke-width="1"/><line x1="414" y1="321.8" x2="810.5" y2="321.8" stroke="#2f3448" stroke-width="1"/><line x1="414" y1="275.3" x2="810.5" y2="275.3" stroke="#2f3448" stroke-width="1"/><line x1="414" y1="228.8" x2="810.5" y2="228.8" stroke="#2f3448" stroke-width="1"/><rect x="417.5" y="275.3" width="378.0" height="186.0" fill="#0c3129"/><polygon points="417.5,461.3 417.5,430.1 420.4,432.4 423.4,432.5 426.3,426.0 429.2,422.0 432.2,424.6 435.1,418.3 438.0,427.8 440.9,431.4 443.9,429.7 446.8,432.5 449.7,429.2 452.7,429.0 455.6,426.8 458.5,428.3 461.5,430.5 464.4,429.3 467.3,423.4 470.2,427.9 473.2,426.8 476.1,429.0 479.0,428.8 482.0,426.8 484.9,425.7 487.8,422.6 490.8,426.3 493.7,430.8 496.6,432.3 499.5,425.1 502.5,430.5 505.4,425.1 508.3,431.5 511.3,428.7 514.2,433.0 517.1,428.0 520.1,428.4 523.0,432.5 525.9,425.2 528.8,424.3 531.8,432.4 534.7,427.2 537.6,432.1 540.6,425.2 543.5,430.8 546.4,431.9 549.4,428.9 552.3,432.1 555.2,425.6 558.2,424.5 561.1,423.4 564.0,425.3 566.9,429.8 569.9,428.3 572.8,431.0 575.7,425.4 578.7,426.4 581.6,427.0 584.5,430.7 587.5,429.0 590.4,424.5 593.3,431.0 596.2,427.5 599.2,428.7 602.1,432.3 605.0,426.0 608.0,431.4 610.9,425.9 613.8,429.4 616.8,428.2 619.7,420.0 622.6,427.2 625.5,425.5 628.5,428.3 631.4,425.2 634.3,430.8 637.3,427.8 640.2,431.9 643.1,428.9 646.1,429.3 649.0,428.3 651.9,429.1 654.8,425.9 657.8,426.6 660.7,428.4 663.6,432.1 666.6,430.6 669.5,428.0 672.4,429.1 675.4,428.5 678.3,428.3 681.2,426.8 684.2,430.7 687.1,422.3 690.0,432.4 692.9,427.1 695.9,431.6 698.8,431.8 701.7,431.1 704.7,428.7 707.6,431.6 710.5,430.0 713.5,421.7 716.4,432.9 719.3,422.0 722.2,420.6 725.2,426.1 728.1,429.3 731.0,424.5 734.0,423.8 736.9,423.0 739.8,419.9 742.8,425.3 745.7,428.1 748.6,431.9 751.5,432.1 754.5,431.2 757.4,426.2 760.3,431.4 763.3,425.3 766.2,431.3 769.1,432.1 772.1,428.6 775.0,428.5 777.9,430.0 780.8,427.3 783.8,429.5 786.7,430.7 789.6,425.5 792.6,430.5 795.5,428.9 795.5,461.3" fill="#7f5a2f"/><polygon points="417.5,461.3 417.5,444.3 420.4,445.3 423.4,446.5 426.3,445.1 429.2,444.4 432.2,445.2 435.1,445.6 438.0,443.7 440.9,444.3 443.9,446.4 446.8,444.2 449.7,444.5 452.7,443.8 455.6,444.6 458.5,444.0 461.5,446.2 464.4,446.1 467.3,443.9 470.2,445.5 473.2,444.6 476.1,443.3 479.0,446.4 482.0,443.1 484.9,445.2 487.8,446.0 490.8,446.1 493.7,443.5 496.6,444.7 499.5,443.6 502.5,445.3 505.4,446.1 508.3,445.8 511.3,445.7 514.2,445.3 517.1,444.2 520.1,444.2 523.0,443.8 525.9,445.2 528.8,446.4 531.8,446.0 534.7,446.1 537.6,446.5 540.6,446.1 543.5,445.3 546.4,443.1 549.4,446.3 552.3,445.7 555.2,446.5 558.2,446.1 561.1,443.1 564.0,445.7 566.9,443.9 569.9,445.4 572.8,443.1 575.7,443.7 578.7,444.8 581.6,445.6 584.5,443.2 587.5,443.1 590.4,445.8 593.3,445.9 596.2,443.6 599.2,443.8 602.1,443.4 605.0,444.9 608.0,445.4 610.9,445.2 613.8,444.0 616.8,443.4 619.7,443.1 622.6,444.7 625.5,444.3 628.5,445.1 631.4,445.9 634.3,445.8 637.3,445.1 640.2,445.4 643.1,443.4 646.1,444.8 649.0,446.5 651.9,446.6 654.8,444.9 657.8,445.5 660.7,443.8 663.6,445.7 666.6,444.8 669.5,443.4 672.4,444.8 675.4,445.0 678.3,443.3 681.2,443.3 684.2,443.3 687.1,445.0 690.0,446.3 692.9,443.4 695.9,444.3 698.8,443.2 701.7,445.2 704.7,443.7 707.6,444.8 710.5,445.5 713.5,445.0 716.4,444.4 719.3,443.8 722.2,446.5 725.2,446.1 728.1,443.7 731.0,444.6 734.0,444.2 736.9,444.4 739.8,446.4 742.8,445.4 745.7,445.7 748.6,445.8 751.5,446.4 754.5,445.5 757.4,444.8 760.3,446.5 763.3,444.7 766.2,443.3 769.1,445.1 772.1,445.2 775.0,443.1 777.9,444.1 780.8,445.4 783.8,444.0 786.7,446.3 789.6,444.2 792.6,445.6 795.5,445.0 795.5,461.3" fill="#6c5a87"/><rect x="417.5" y="453" width="378.0" height="1.6" fill="#a9a6e6"/><rect x="417.5" y="454.6" width="378.0" height="3.6" fill="#1d3df0"/><rect x="417.5" y="458.2" width="378.0" height="2.2" fill="#5e69d6"/><rect x="417.5" y="460.2" width="378.0" height="1.6" fill="#5cbcff"/><polyline points="417.5,444.3 420.4,445.3 423.4,446.5 426.3,445.1 429.2,444.4 432.2,445.2 435.1,445.6 438.0,443.7 440.9,444.3 443.9,446.4 446.8,444.2 449.7,444.5 452.7,443.8 455.6,444.6 458.5,444.0 461.5,446.2 464.4,446.1 467.3,443.9 470.2,445.5 473.2,444.6 476.1,443.3 479.0,446.4 482.0,443.1 484.9,445.2 487.8,446.0 490.8,446.1 493.7,443.5 496.6,444.7 499.5,443.6 502.5,445.3 505.4,446.1 508.3,445.8 511.3,445.7 514.2,445.3 517.1,444.2 520.1,444.2 523.0,443.8 525.9,445.2 528.8,446.4 531.8,446.0 534.7,446.1 537.6,446.5 540.6,446.1 543.5,445.3 546.4,443.1 549.4,446.3 552.3,445.7 555.2,446.5 558.2,446.1 561.1,443.1 564.0,445.7 566.9,443.9 569.9,445.4 572.8,443.1 575.7,443.7 578.7,444.8 581.6,445.6 584.5,443.2 587.5,443.1 590.4,445.8 593.3,445.9 596.2,443.6 599.2,443.8 602.1,443.4 605.0,444.9 608.0,445.4 610.9,445.2 613.8,444.0 616.8,443.4 619.7,443.1 622.6,444.7 625.5,444.3 628.5,445.1 631.4,445.9 634.3,445.8 637.3,445.1 640.2,445.4 643.1,443.4 646.1,444.8 649.0,446.5 651.9,446.6 654.8,444.9 657.8,445.5 660.7,443.8 663.6,445.7 666.6,444.8 669.5,443.4 672.4,444.8 675.4,445.0 678.3,443.3 681.2,443.3 684.2,443.3 687.1,445.0 690.0,446.3 692.9,443.4 695.9,444.3 698.8,443.2 701.7,445.2 704.7,443.7 707.6,444.8 710.5,445.5 713.5,445.0 716.4,444.4 719.3,443.8 722.2,446.5 725.2,446.1 728.1,443.7 731.0,444.6 734.0,444.2 736.9,444.4 739.8,446.4 742.8,445.4 745.7,445.7 748.6,445.8 751.5,446.4 754.5,445.5 757.4,444.8 760.3,446.5 763.3,444.7 766.2,443.3 769.1,445.1 772.1,445.2 775.0,443.1 777.9,444.1 780.8,445.4 783.8,444.0 786.7,446.3 789.6,444.2 792.6,445.6 795.5,445.0" fill="none" stroke="#6a5cff" stroke-width="2.6" stroke-linejoin="round"/><polyline points="417.5,430.1 420.4,432.4 423.4,432.5 426.3,426.0 429.2,422.0 432.2,424.6 435.1,418.3 438.0,427.8 440.9,431.4 443.9,429.7 446.8,432.5 449.7,429.2 452.7,429.0 455.6,426.8 458.5,428.3 461.5,430.5 464.4,429.3 467.3,423.4 470.2,427.9 473.2,426.8 476.1,429.0 479.0,428.8 482.0,426.8 484.9,425.7 487.8,422.6 490.8,426.3 493.7,430.8 496.6,432.3 499.5,425.1 502.5,430.5 505.4,425.1 508.3,431.5 511.3,428.7 514.2,433.0 517.1,428.0 520.1,428.4 523.0,432.5 525.9,425.2 528.8,424.3 531.8,432.4 534.7,427.2 537.6,432.1 540.6,425.2 543.5,430.8 546.4,431.9 549.4,428.9 552.3,432.1 555.2,425.6 558.2,424.5 561.1,423.4 564.0,425.3 566.9,429.8 569.9,428.3 572.8,431.0 575.7,425.4 578.7,426.4 581.6,427.0 584.5,430.7 587.5,429.0 590.4,424.5 593.3,431.0 596.2,427.5 599.2,428.7 602.1,432.3 605.0,426.0 608.0,431.4 610.9,425.9 613.8,429.4 616.8,428.2 619.7,420.0 622.6,427.2 625.5,425.5 628.5,428.3 631.4,425.2 634.3,430.8 637.3,427.8 640.2,431.9 643.1,428.9 646.1,429.3 649.0,428.3 651.9,429.1 654.8,425.9 657.8,426.6 660.7,428.4 663.6,432.1 666.6,430.6 669.5,428.0 672.4,429.1 675.4,428.5 678.3,428.3 681.2,426.8 684.2,430.7 687.1,422.3 690.0,432.4 692.9,427.1 695.9,431.6 698.8,431.8 701.7,431.1 704.7,428.7 707.6,431.6 710.5,430.0 713.5,421.7 716.4,432.9 719.3,422.0 722.2,420.6 725.2,426.1 728.1,429.3 731.0,424.5 734.0,423.8 736.9,423.0 739.8,419.9 742.8,425.3 745.7,428.1 748.6,431.9 751.5,432.1 754.5,431.2 757.4,426.2 760.3,431.4 763.3,425.3 766.2,431.3 769.1,432.1 772.1,428.6 775.0,428.5 777.9,430.0 780.8,427.3 783.8,429.5 786.7,430.7 789.6,425.5 792.6,430.5 795.5,428.9" fill="none" stroke="#ff8a24" stroke-width="2.5" stroke-linejoin="round"/><line x1="417.5" y1="414.8" x2="795.5" y2="414.8" stroke="#33524f" stroke-width="1"/><line x1="417.5" y1="368.3" x2="795.5" y2="368.3" stroke="#33524f" stroke-width="1"/><line x1="417.5" y1="321.8" x2="795.5" y2="321.8" stroke="#33524f" stroke-width="1"/><line x1="417.5" y1="275.3" x2="796.5" y2="275.3" stroke="#22d040" stroke-width="2.4"/><line x1="414" y1="461.8" x2="810.5" y2="461.8" stroke="#2f3448" stroke-width="1"/><line x1="437.5" y1="462.3" x2="437.5" y2="468.3" stroke="#3a3f55" stroke-width="1"/><line x1="514.9" y1="462.3" x2="514.9" y2="468.3" stroke="#3a3f55" stroke-width="1"/><line x1="592.5" y1="462.3" x2="592.5" y2="468.3" stroke="#3a3f55" stroke-width="1"/><line x1="670.2" y1="462.3" x2="670.2" y2="468.3" stroke="#3a3f55" stroke-width="1"/><line x1="748.0" y1="462.3" x2="748.0" y2="468.3" stroke="#3a3f55" stroke-width="1"/></svg>
<div class="a t" style="left:816.80px;top:222.24px;font-size:12px;color:#c8cfe8;letter-spacing:0.6px;-webkit-text-stroke:0">125</div>
<div class="a t" style="left:816.80px;top:268.74px;font-size:12px;color:#c8cfe8;letter-spacing:0.6px;-webkit-text-stroke:0">100</div>
<div class="a t" style="left:816.80px;top:315.24px;font-size:12px;color:#c8cfe8;letter-spacing:0.6px;-webkit-text-stroke:0">75</div>
<div class="a t" style="left:816.80px;top:361.74px;font-size:12px;color:#c8cfe8;letter-spacing:0.6px;-webkit-text-stroke:0">50</div>
<div class="a t" style="left:816.80px;top:408.24px;font-size:12px;color:#c8cfe8;letter-spacing:0.6px;-webkit-text-stroke:0">25</div>
<div class="a t" style="left:816.80px;top:454.74px;font-size:12px;color:#c8cfe8;letter-spacing:0.6px;-webkit-text-stroke:0">0</div>
<div class="a t" style="left:137.50px;width:600px;text-align:center;top:471.84px;font-size:12px;color:#c8cfe8;letter-spacing:0.75px;-webkit-text-stroke:0">13:22</div>
<div class="a t" style="left:214.90px;width:600px;text-align:center;top:471.84px;font-size:12px;color:#c8cfe8;letter-spacing:0.75px;-webkit-text-stroke:0">13:24</div>
<div class="a t" style="left:292.50px;width:600px;text-align:center;top:471.84px;font-size:12px;color:#c8cfe8;letter-spacing:0.75px;-webkit-text-stroke:0">13:26</div>
<div class="a t" style="left:370.20px;width:600px;text-align:center;top:471.84px;font-size:12px;color:#c8cfe8;letter-spacing:0.75px;-webkit-text-stroke:0">13:28</div>
<div class="a t" style="left:448.00px;width:600px;text-align:center;top:471.84px;font-size:12px;color:#c8cfe8;letter-spacing:0.75px;-webkit-text-stroke:0">13:30</div>
<div class="a t" style="left:805.4px;top:339.5px;width:100px;height:12px;text-align:center;font-size:12px;color:#c8cfe8;letter-spacing:0.5px;transform:rotate(90deg)">Percent (%)</div>
<div class="a" style="left:846px;top:230px;width:27px;height:24.6px;background:#555659;border-radius:3px"></div>
<svg class="a" style="left:850px;top:234px;" width="19" height="17" viewBox="0 0 19 17"><g stroke="#e0e0e0" stroke-width="3" stroke-linecap="round"><path d="M3,4.4 H16"/><path d="M3,9.9 H16"/><path d="M3,15.5 H16"/></g></svg>
<div class="a" style="left:395px;top:537px;width:496px;height:560px;border:1px solid #2b3150;border-radius:5px"></div>
<svg class="a" style="left:413.5px;top:554px;" width="15" height="13" viewBox="0 0 15 13"><g stroke="#fff" stroke-width="2"><path d="M0,1.2 H15"/><path d="M0,6.5 H15"/><path d="M0,11.8 H15"/></g></svg>
<div class="a t" style="left:432.80px;top:552.54px;font-size:15.9px;color:#fff;">Process Snapshot List</div>
<svg class="a" style="left:412px;top:591.5px;" width="17.0" height="17.0" viewBox="0 0 17.0 17.0"><g transform="scale(1.0)"><path d="M13.2,4.6 A6.6,6.6 0 1 0 14.4,10.8" fill="none" stroke="#fff" stroke-width="2.8"/><path d="M9.8,5.8 L15.6,5.8 L15.6,0 Z" fill="#fff"/></g></svg>
<svg class="a" style="left:441.5px;top:591.5px;" width="17" height="16" viewBox="0 0 17 16"><rect x="0.5" y="0.5" width="3.6" height="15" fill="#fff"/><rect x="6.6" y="0.5" width="3.6" height="15" fill="#fff"/><rect x="12.7" y="0.5" width="3.6" height="15" fill="#fff"/></svg>
<div class="a" style="left:471px;top:588px;width:1px;height:24px;background:#262b3e"></div>
<svg class="a" style="left:484.5px;top:591.5px;" width="18.05" height="18.05" viewBox="0 0 18.05 18.05"><g transform="scale(0.95)"><circle cx="7.6" cy="7.6" r="5.8" fill="none" stroke="#fff" stroke-width="2.4"/><path d="M11.8,11.8 L17.2,17.2" stroke="#fff" stroke-width="3.0" stroke-linecap="round"/></g></svg>
<div class="a t" style="left:506.30px;top:593.62px;font-size:12.5px;color:#fff;font-weight:700;">Search</div>
<svg class="a" style="left:553.5px;top:597px;" width="9" height="6" viewBox="0 0 9 6"><path d="M0.5,0.5 L8.5,0.5 L4.5,5 Z" fill="#8a8d99"/></svg>
<div class="a" style="left:575.5px;top:588px;width:1px;height:24px;background:#262b3e"></div>
<svg class="a" style="left:588px;top:591.5px;" width="18" height="18" viewBox="0 0 18 18"><path d="M9,0.5 V9.5" stroke="#fff" stroke-width="2.6"/><path d="M4.2,6.2 L9,11.2 L13.8,6.2" fill="none" stroke="#fff" stroke-width="2.6" stroke-linejoin="miter"/><path d="M1,11.5 L6,11.5 L9,14 L12,11.5 L17,11.5 L17,15.8 Q17,17.3 15.5,17.3 L2.5,17.3 Q1,17.3 1,15.8 Z" fill="#fff"/><circle cx="14.3" cy="14.7" r="0.9" fill="#090d27"/></svg>
<div class="a t" style="left:609.70px;top:593.62px;font-size:12.5px;color:#fff;font-weight:700;">Request</div>
<svg class="a" style="left:672px;top:591px;" width="17" height="18" viewBox="0 0 17 18"><path d="M5.2,1 H11.8 M6.3,1 V6.5 L1.2,15 Q0.5,17 2.6,17 H14.4 Q16.5,17 15.8,15 L10.7,6.5 V1" fill="#fff" stroke="#fff" stroke-width="1.6" stroke-linejoin="round"/><path d="M7.5,2.5 V7 L5.8,10 H11.2 L9.5,7 V2.5 Z" fill="#090d27"/></svg>
<div class="a t" style="left:693.00px;top:593.62px;font-size:12.5px;color:#fff;font-weight:700;">Analyze</div>
<svg class="a" style="left:753px;top:590px;" width="19" height="20" viewBox="0 0 19 20"><g fill="#fff"><path d="M1.5,6 H12.5 V2 L18,7.2 L12.5,12.4 V8.4 H1.5 Z"/><path d="M17.5,13.2 H6.5 V9.2 L1,14.4 L6.5,19.6 V15.6 H17.5 Z"/></g></svg>
<div class="a t" style="left:774.70px;top:593.20px;font-size:13px;color:#fff;font-weight:700;">Diff Analyze</div>
<div class="a" style="left:403px;top:621.5px;width:480px;height:27.5px;background:#1d2137"></div>
<div class="a" style="left:440px;top:621.5px;width:31px;height:27.5px;background:#1a1e34"></div>
<div class="a t" style="right:1488.00px;top:628.00px;font-size:13px;color:#6877b5;">#</div>
<div class="a" style="left:448px;top:627.2px;width:14.5px;height:14.5px;background:#fff;border-radius:2.5px"></div>
<div class="a t" style="left:475.00px;top:628.50px;font-size:13px;color:#6877b5;letter-spacing:0.4px;">Created</div>
<div class="a t" style="left:632.50px;top:628.50px;font-size:13px;color:#6877b5;letter-spacing:0.4px;">UUID</div>
<div class="a" style="left:403px;top:652px;width:68px;height:34px;background:#363e5d"></div>
<div class="a" style="left:471px;top:649.5px;width:412px;height:36.4px;background:#363e5d"></div>
<div class="a" style="left:471px;top:685.9px;width:412px;height:35.9px;background:#1c2033"></div>
<div class="a" style="left:471px;top:757.7px;width:412px;height:35.9px;background:#1c2033"></div>
<div class="a" style="left:471px;top:829.5px;width:412px;height:35.9px;background:#1c2033"></div>
<div class="a" style="left:471px;top:901.3px;width:412px;height:35.9px;background:#1c2033"></div>
<div class="a" style="left:471px;top:973.1px;width:412px;height:35.9px;background:#1c2033"></div>
<div class="a" style="left:471px;top:1044.9px;width:412px;height:35.9px;background:#1c2033"></div>
<div class="a" style="left:440.5px;top:652px;width:1px;height:430px;background:#25272c"></div>
<div class="a" style="left:470.5px;top:652px;width:1px;height:430px;background:#25272c"></div>
<div class="a" style="left:629px;top:652px;width:1px;height:430px;background:#25272c"></div>
<div class="a" style="left:854px;top:652px;width:1px;height:430px;background:#25272c"></div>
<div class="a t" style="right:1488.00px;top:660.00px;font-size:13px;color:#e8eaf0;">1</div>
<div class="a" style="left:448px;top:658.8px;width:14.5px;height:14.5px;background:#7a7a7a;border-radius:2.5px"></div>
<svg class="a" style="left:448px;top:658.8px;" width="15" height="15" viewBox="0 0 15 15"><polyline points="3.2,7.6 6.2,10.6 11.6,4" fill="none" stroke="#fff" stroke-width="2"/></svg>
<div class="a t" style="left:475.60px;top:660.00px;font-size:13px;color:#fff;letter-spacing:0.8px;">2024-07-22 13:30:40</div>
<div class="a t" style="left:633.00px;top:660.00px;font-size:13px;color:#fff;letter-spacing:0.27px;">9E22753C-14E5-41AE-A76B-BE3...</div>
<div class="a t" style="right:1488.00px;top:696.00px;font-size:13px;color:#c8cbd6;">2</div>
<div class="a" style="left:448px;top:694.8px;width:14.5px;height:14.5px;background:#fff;border-radius:2.5px"></div>
<div class="a t" style="left:475.60px;top:696.00px;font-size:13px;color:#fff;letter-spacing:0.8px;">2024-07-22 13:30:24</div>
<div class="a t" style="left:633.00px;top:696.00px;font-size:13px;color:#fff;letter-spacing:0.27px;">387D558B-6AF7-4FEC-8B8A-1A0...</div>
<div class="a t" style="right:1488.00px;top:732.00px;font-size:13px;color:#c8cbd6;">3</div>
<div class="a" style="left:448px;top:730.8px;width:14.5px;height:14.5px;background:#fff;border-radius:2.5px"></div>
<div class="a t" style="left:475.60px;top:732.00px;font-size:13px;color:#fff;letter-spacing:0.8px;">2024-07-22 13:30:09</div>
<div class="a t" style="left:633.00px;top:732.00px;font-size:13px;color:#fff;letter-spacing:0.27px;">72FE1F37-1015-462A-A316-2A4...</div>
<div class="a t" style="right:1488.00px;top:768.00px;font-size:13px;color:#c8cbd6;">4</div>
<div class="a" style="left:448px;top:766.8px;width:14.5px;height:14.5px;background:#fff;border-radius:2.5px"></div>
<div class="a t" style="left:475.60px;top:768.00px;font-size:13px;color:#fff;letter-spacing:0.8px;">2024-07-22 13:29:18</div>
<div class="a t" style="left:633.00px;top:768.00px;font-size:13px;color:#fff;letter-spacing:0.27px;">6E94E5B9-3BED-4EAA-B29E-F60...</div>
<div class="a" style="left:582.5px;top:577.5px;width:166px;height:39px;border:2px solid #f01010"></div>
<div class="a" style="left:664px;top:577.5px;width:2px;height:39px;background:#f01010"></div>
<div class="a" style="left:564.3000000000001px;top:562.1px;width:37.8px;height:37.8px;background:#f00000;border-radius:50%"></div>
<div class="a t" style="left:283.20px;width:600px;text-align:center;top:571.02px;font-size:21px;color:#fff;">1</div>
<div class="a" style="left:729.2px;top:562.0px;width:37.6px;height:37.6px;background:#f00000;border-radius:50%"></div>
<div class="a t" style="left:448.00px;width:600px;text-align:center;top:570.82px;font-size:21px;color:#fff;">2</div>
<div class="a" style="left:893px;top:177px;width:993px;height:246.5px;border:1px solid #2b3150;border-radius:5px"></div>
<svg class="a" style="left:911.5px;top:192px;" width="14" height="17" viewBox="0 0 14 17"><path d="M1,1.5 Q1,1 1.5,1 L8.6,1 L12.8,5.2 L12.8,15.5 Q12.8,16 12.3,16 L1.5,16 Q1,16 1,15.5 Z" fill="none" stroke="#fff" stroke-width="1.8" stroke-linejoin="round"/><path d="M8.2,1.2 V5.6 H12.6" fill="none" stroke="#fff" stroke-width="1.5"/><path d="M3.6,9 H10.2 M3.6,11.4 H10.2 M3.6,13.8 H10.2" stroke="#fff" stroke-width="1.3"/></svg>
<div class="a t" style="left:928.10px;top:192.76px;font-size:15.4px;color:#fff;">Analysis Process Info &gt; 2024-07-22 13:30:40</div>
<div class="a t" style="left:912.20px;top:235.10px;font-size:15px;color:#fff;">Created</div>
<div class="a t" style="left:1006.70px;top:235.27px;font-size:14.8px;color:#fff;">2024-07-22 13:30:39</div>
<div class="a t" style="left:1248.60px;top:235.10px;font-size:15px;color:#fff;">Uptime</div>
<div class="a t" style="left:1328.80px;top:235.27px;font-size:14.8px;color:#fff;">21 days 03:44:42</div>
<div class="a t" style="left:1571.20px;top:235.10px;font-size:15px;color:#fff;">Load</div>
<div class="a t" style="left:1571.20px;top:267.80px;font-size:15px;color:#fff;">Avg</div>
<div class="a t" style="left:1637.80px;top:235.31px;font-size:14.75px;color:#fff;">3.2, 3.2, 3.7 (1m, 5m, 15m)</div>
<div class="a" style="left:901px;top:299px;width:968px;height:1px;background:#2b3150"></div>
<div class="a t" style="left:912.20px;top:318.23px;font-size:14.5px;color:#fff;">Processes</div>
<div class="a t" style="left:1239.30px;top:317.80px;font-size:15px;color:#fff;">279 Total / 142 Sleeping, 1 Running, 0 Zombie, 0 Stopped</div>
<div class="a" style="left:901px;top:350px;width:968px;height:1px;background:#2b3150"></div>
<div class="a t" style="left:912.20px;top:368.30px;font-size:15px;color:#fff;">CPU</div>
<div class="a t" style="left:912.20px;top:399.80px;font-size:15px;color:#fff;">Usage</div>
<div class="a t" style="left:1207.40px;top:368.73px;font-size:14.5px;color:#fff;">User : 10.0% , System : 10.0% , Nice: 0.0 %, Wait: 0.0% , Idle: 80.0 %</div>
<div class="a" style="left:1875px;top:178px;width:10.5px;height:245px;background:linear-gradient(90deg,#30354c 0,#0f1330 20%,#0f1330 80%,#30354c 100%);border-radius:5px;opacity:.7"></div>
<div class="a" style="left:1875px;top:178px;width:10.5px;height:179px;background:linear-gradient(90deg,#5a6078 0,#2b3048 22%,#222740 50%,#2b3048 78%,#5a6078 100%);border-radius:5px"></div>
<div class="a" style="left:893px;top:447px;width:993px;height:650px;border:1px solid #2b3150;border-radius:5px"></div>
<svg class="a" style="left:910px;top:467.5px;" width="16.15" height="16.15" viewBox="0 0 16.15 16.15"><g transform="scale(0.95)"><path d="M13.2,4.6 A6.6,6.6 0 1 0 14.4,10.8" fill="none" stroke="#fff" stroke-width="2.8"/><path d="M9.8,5.8 L15.6,5.8 L15.6,0 Z" fill="#fff"/></g></svg>
<svg class="a" style="left:939.5px;top:467.5px;" width="17" height="16" viewBox="0 0 17 16"><rect x="0.5" y="0.5" width="3.6" height="15" fill="#fff"/><rect x="6.6" y="0.5" width="3.6" height="15" fill="#fff"/><rect x="12.7" y="0.5" width="3.6" height="15" fill="#fff"/></svg>
<div class="a" style="left:969px;top:464.5px;width:1px;height:25px;background:#262b3e"></div>
<div class="a" style="left:977px;top:464.5px;width:180px;height:25px;background:#1c2035;border:1px solid #6d6a64;border-radius:12.5px"></div>
<svg class="a" style="left:983.5px;top:468.5px;" width="16.72" height="16.72" viewBox="0 0 16.72 16.72"><g transform="scale(0.88)"><circle cx="7.6" cy="7.6" r="5.8" fill="none" stroke="#dfe2ee" stroke-width="2"/><path d="M11.8,11.8 L17.2,17.2" stroke="#dfe2ee" stroke-width="2.6" stroke-linecap="round"/></g></svg>
<div class="a t" style="left:1004.10px;top:470.50px;font-size:13px;color:#6877b5;letter-spacing:0.15px;">All Fields</div>
<svg class="a" style="left:1165.5px;top:467px;" width="18.43" height="18.43" viewBox="0 0 18.43 18.43"><g transform="scale(0.97)"><circle cx="7.6" cy="7.6" r="5.8" fill="none" stroke="#fff" stroke-width="2.4"/><path d="M11.8,11.8 L17.2,17.2" stroke="#fff" stroke-width="3.0" stroke-linecap="round"/></g></svg>
<div class="a t" style="left:1187.50px;top:470.42px;font-size:12.5px;color:#fff;font-weight:700;">Search</div>
<svg class="a" style="left:1235.5px;top:474px;" width="9" height="6" viewBox="0 0 9 6"><path d="M0.5,0.5 L8.5,0.5 L4.5,5 Z" fill="#8a8d99"/></svg>
<div class="a" style="left:1256.5px;top:464.5px;width:1px;height:25px;background:#262b3e"></div>
<svg class="a" style="left:1270px;top:467px;" width="18" height="18" viewBox="0 0 18 18"><path d="M9,0.5 V9.5" stroke="#fff" stroke-width="2.6"/><path d="M4.2,6.2 L9,11.2 L13.8,6.2" fill="none" stroke="#fff" stroke-width="2.6" stroke-linejoin="miter"/><path d="M1,11.5 L6,11.5 L9,14 L12,11.5 L17,11.5 L17,15.8 Q17,17.3 15.5,17.3 L2.5,17.3 Q1,17.3 1,15.8 Z" fill="#fff"/><circle cx="14.3" cy="14.7" r="0.9" fill="#090d27"/></svg>
<div class="a t" style="left:1291.00px;top:470.42px;font-size:12.5px;color:#fff;font-weight:700;">Excel Export</div>
<div class="a" style="left:901px;top:497.5px;width:977px;height:27.5px;background:#1d2137"></div>
<div class="a" style="left:901px;top:497.5px;width:38px;height:27.5px;background:#1b1f35"></div>
<div class="a t" style="right:990.20px;top:504.40px;font-size:13px;color:#6877b5;">#</div>
<div class="a t" style="left:943.60px;top:504.40px;font-size:13px;color:#6877b5;letter-spacing:0.45px;">PID</div>
<div class="a t" style="left:1010.80px;top:504.40px;font-size:13px;color:#6877b5;letter-spacing:0.45px;">User</div>
<div class="a t" style="left:1095.60px;top:504.40px;font-size:13px;color:#6877b5;letter-spacing:0.45px;">Start Time</div>
<div class="a t" style="left:1230.50px;top:504.40px;font-size:13px;color:#6877b5;letter-spacing:0.45px;">Mem</div>
<div class="a t" style="left:1309.30px;top:504.40px;font-size:13px;color:#6877b5;letter-spacing:0.45px;">RSS Mem</div>
<div class="a t" style="left:1387.90px;top:504.40px;font-size:13px;color:#6877b5;letter-spacing:0.45px;">Shared ...</div>
<div class="a t" style="left:1466.60px;top:504.40px;font-size:13px;color:#6877b5;letter-spacing:0.45px;">State</div>
<div class="a t" style="left:1545.40px;top:504.40px;font-size:13px;color:#6877b5;letter-spacing:0.45px;">CPU Time</div>
<div class="a t" style="left:1635.30px;top:504.40px;font-size:13px;color:#6877b5;letter-spacing:0.45px;">CPU(...</div>
<div class="a t" style="left:1691.60px;top:504.40px;font-size:13px;color:#6877b5;letter-spacing:0.45px;">MEM...</div>
<div class="a t" style="left:1748.40px;top:504.40px;font-size:13px;color:#6877b5;letter-spacing:0.45px;">Command</div>
<div class="a" style="left:939.5px;top:561px;width:929px;height:36px;background:#1c2033"></div>
<div class="a" style="left:939.5px;top:633px;width:929px;height:36px;background:#1c2033"></div>
<div class="a" style="left:939.5px;top:705px;width:929px;height:36px;background:#1c2033"></div>
<div class="a" style="left:939.5px;top:777px;width:929px;height:36px;background:#1c2033"></div>
<div class="a" style="left:939.5px;top:849px;width:929px;height:36px;background:#1c2033"></div>
<div class="a" style="left:939.5px;top:921px;width:929px;height:36px;background:#1c2033"></div>
<div class="a" style="left:939.5px;top:993px;width:929px;height:36px;background:#1c2033"></div>
<div class="a" style="left:939.5px;top:1065px;width:929px;height:9px;background:#1c2033"></div>
<div class="a" style="left:939.2px;top:525px;width:1px;height:549px;background:#25272c"></div>
<div class="a" style="left:1006.9px;top:525px;width:1px;height:549px;background:#25272c"></div>
<div class="a" style="left:1092.4px;top:525px;width:1px;height:549px;background:#25272c"></div>
<div class="a" style="left:1227.3px;top:525px;width:1px;height:549px;background:#25272c"></div>
<div class="a" style="left:1306.2px;top:525px;width:1px;height:549px;background:#25272c"></div>
<div class="a" style="left:1384.6px;top:525px;width:1px;height:549px;background:#25272c"></div>
<div class="a" style="left:1463px;top:525px;width:1px;height:549px;background:#25272c"></div>
<div class="a" style="left:1542.5px;top:525px;width:1px;height:549px;background:#25272c"></div>
<div class="a" style="left:1632.2px;top:525px;width:1px;height:549px;background:#25272c"></div>
<div class="a" style="left:1688.5px;top:525px;width:1px;height:549px;background:#25272c"></div>
<div class="a" style="left:1744.7px;top:525px;width:1px;height:549px;background:#25272c"></div>
<div class="a t" style="right:990.50px;top:536.00px;font-size:13px;color:#c8cbd6;letter-spacing:0.3px;">1</div>
<div class="a t" style="left:944.20px;top:536.00px;font-size:13px;color:#fff;letter-spacing:0.3px;">3,577,6...</div>
<svg class="a" style="left:1012px;top:535.5px;" width="17" height="17" viewBox="0 0 17 17"><circle cx="8.5" cy="8.5" r="7.3" fill="none" stroke="#a6a9b4" stroke-width="1.6"/><circle cx="8.5" cy="5" r="1.2" fill="#d0d2da"/><path d="M6.8,7.3 H9.3 V12.6 M6.6,12.6 H10.6" fill="none" stroke="#d0d2da" stroke-width="1.5"/></svg>
<div class="a t" style="left:1032.40px;top:536.50px;font-size:13px;color:#fff;letter-spacing:0.3px;">khanap...</div>
<div class="a t" style="left:1096.60px;top:536.00px;font-size:13px;color:#fff;letter-spacing:0.62px;">2024-07-19 15:05...</div>
<div class="a t" style="right:621.80px;top:536.00px;font-size:13px;color:#fff;letter-spacing:0.3px;">13.5 GB</div>
<div class="a t" style="right:542.40px;top:536.00px;font-size:13px;color:#fff;letter-spacing:0.3px;">4.9 GB</div>
<div class="a t" style="right:464.00px;top:536.00px;font-size:13px;color:#fff;letter-spacing:0.3px;">19.2 MB</div>
<div class="a" style="left:1464px;top:533.7px;width:78px;height:19.4px;background:#9aaab3"></div>
<div class="a t" style="left:1201.30px;width:600px;text-align:center;top:536.00px;font-size:13px;color:#fff;letter-spacing:0.3px;">Sleeping</div>
<div class="a t" style="right:295.30px;top:536.00px;font-size:13px;color:#fff;letter-spacing:0.85px;">07:12:09.5</div>
<div class="a t" style="left:1636.30px;top:533.00px;font-size:13px;color:#fff;letter-spacing:0.55px;">106.3...</div>
<div class="a" style="left:1633px;top:549.5px;width:55.5px;height:6.8px;background:#f44336"></div>
<div class="a t" style="left:1692.30px;top:533.00px;font-size:13px;color:#fff;letter-spacing:0.55px;">14.7%</div>
<div class="a" style="left:1689.3px;top:549.5px;width:7.5px;height:6.8px;background:#4caf50"></div>
<div class="a t" style="left:1748.40px;top:536.00px;font-size:13px;color:#fff;letter-spacing:0.42px;">java:org.apache....</div>
<div class="a t" style="right:990.50px;top:572.00px;font-size:13px;color:#c8cbd6;letter-spacing:0.3px;">2</div>
<div class="a t" style="left:944.20px;top:572.00px;font-size:13px;color:#fff;letter-spacing:0.3px;">3,580,6...</div>
<svg class="a" style="left:1012px;top:571.5px;" width="17" height="17" viewBox="0 0 17 17"><circle cx="8.5" cy="8.5" r="7.3" fill="none" stroke="#a6a9b4" stroke-width="1.6"/><circle cx="8.5" cy="5" r="1.2" fill="#d0d2da"/><path d="M6.8,7.3 H9.3 V12.6 M6.6,12.6 H10.6" fill="none" stroke="#d0d2da" stroke-width="1.5"/></svg>
<div class="a t" style="left:1032.40px;top:572.50px;font-size:13px;color:#fff;letter-spacing:0.3px;">influxdb</div>
<div class="a t" style="left:1096.60px;top:572.00px;font-size:13px;color:#fff;letter-spacing:0.62px;">2024-07-10 09:33...</div>
<div class="a t" style="right:621.80px;top:572.00px;font-size:13px;color:#fff;letter-spacing:0.3px;">27.9 GB</div>
<div class="a t" style="right:542.40px;top:572.00px;font-size:13px;color:#fff;letter-spacing:0.3px;">312.0 MB</div>
<div class="a t" style="right:464.00px;top:572.00px;font-size:13px;color:#fff;letter-spacing:0.3px;">56.4 MB</div>
<div class="a" style="left:1464px;top:569.7px;width:78px;height:19.4px;background:#9aaab3"></div>
<div class="a t" style="left:1201.30px;width:600px;text-align:center;top:572.00px;font-size:13px;color:#fff;letter-spacing:0.3px;">Sleeping</div>
<div class="a t" style="right:295.30px;top:572.00px;font-size:13px;color:#fff;letter-spacing:0.85px;">20:11:07.1</div>
<div class="a t" style="left:1636.30px;top:569.00px;font-size:13px;color:#fff;letter-spacing:0.55px;">52.3%</div>
<div class="a" style="left:1633px;top:585.5px;width:29.026499999999995px;height:6.8px;background:#f44336"></div>
<div class="a t" style="left:1692.30px;top:569.00px;font-size:13px;color:#fff;letter-spacing:0.55px;">1.1%</div>
<div class="a" style="left:1689.3px;top:585.5px;width:7.5px;height:6.8px;background:#4caf50"></div>
<div class="a t" style="left:1748.40px;top:572.00px;font-size:13px;color:#fff;letter-spacing:0.42px;">/usr/bin/influxd</div>
<div class="a t" style="right:990.50px;top:608.00px;font-size:13px;color:#c8cbd6;letter-spacing:0.3px;">3</div>
<div class="a t" style="left:944.20px;top:608.00px;font-size:13px;color:#fff;letter-spacing:0.3px;">3,577,8...</div>
<svg class="a" style="left:1012px;top:607.5px;" width="17" height="17" viewBox="0 0 17 17"><circle cx="8.5" cy="8.5" r="7.3" fill="none" stroke="#a6a9b4" stroke-width="1.6"/><circle cx="8.5" cy="5" r="1.2" fill="#d0d2da"/><path d="M6.8,7.3 H9.3 V12.6 M6.6,12.6 H10.6" fill="none" stroke="#d0d2da" stroke-width="1.5"/></svg>
<div class="a t" style="left:1032.40px;top:608.50px;font-size:13px;color:#fff;letter-spacing:0.3px;">khanap...</div>
<div class="a t" style="left:1096.60px;top:608.00px;font-size:13px;color:#fff;letter-spacing:0.62px;">2024-07-19 15:05...</div>
<div class="a t" style="right:621.80px;top:608.00px;font-size:13px;color:#fff;letter-spacing:0.3px;">13.2 GB</div>
<div class="a t" style="right:542.40px;top:608.00px;font-size:13px;color:#fff;letter-spacing:0.3px;">3.6 GB</div>
<div class="a t" style="right:464.00px;top:608.00px;font-size:13px;color:#fff;letter-spacing:0.3px;">19.5 MB</div>
<div class="a" style="left:1464px;top:605.7px;width:78px;height:19.4px;background:#9aaab3"></div>
<div class="a t" style="left:1201.30px;width:600px;text-align:center;top:608.00px;font-size:13px;color:#fff;letter-spacing:0.3px;">Sleeping</div>
<div class="a t" style="right:295.30px;top:608.00px;font-size:13px;color:#fff;letter-spacing:0.85px;">07:20:47.5</div>
<div class="a t" style="left:1636.30px;top:605.00px;font-size:13px;color:#fff;letter-spacing:0.55px;">48.9%</div>
<div class="a" style="left:1633px;top:621.5px;width:27.139499999999998px;height:6.8px;background:#f44336"></div>
<div class="a t" style="left:1692.30px;top:605.00px;font-size:13px;color:#fff;letter-spacing:0.55px;">11.0%</div>
<div class="a" style="left:1689.3px;top:621.5px;width:7.5px;height:6.8px;background:#4caf50"></div>
<div class="a t" style="left:1748.40px;top:608.00px;font-size:13px;color:#fff;letter-spacing:0.42px;">java:org.apache....</div>
<div class="a t" style="right:990.50px;top:644.00px;font-size:13px;color:#c8cbd6;letter-spacing:0.3px;">4</div>
<div class="a t" style="right:916.00px;top:644.00px;font-size:13px;color:#fff;letter-spacing:0.35px;">223,727</div>
<svg class="a" style="left:1012px;top:643.5px;" width="17" height="17" viewBox="0 0 17 17"><circle cx="8.5" cy="8.5" r="7.3" fill="none" stroke="#a6a9b4" stroke-width="1.6"/><circle cx="8.5" cy="5" r="1.2" fill="#d0d2da"/><path d="M6.8,7.3 H9.3 V12.6 M6.6,12.6 H10.6" fill="none" stroke="#d0d2da" stroke-width="1.5"/></svg>
<div class="a t" style="left:1032.40px;top:644.50px;font-size:13px;color:#fff;letter-spacing:0.3px;">khansys</div>
<div class="a t" style="left:1096.60px;top:644.00px;font-size:13px;color:#fff;letter-spacing:0.62px;">2024-07-21 02:41...</div>
<div class="a t" style="right:621.80px;top:644.00px;font-size:13px;color:#fff;letter-spacing:0.3px;">5.0 GB</div>
<div class="a t" style="right:542.40px;top:644.00px;font-size:13px;color:#fff;letter-spacing:0.3px;">283.7 MB</div>
<div class="a t" style="right:464.00px;top:644.00px;font-size:13px;color:#fff;letter-spacing:0.3px;">19.1 MB</div>
<div class="a" style="left:1464px;top:641.7px;width:78px;height:19.4px;background:#9aaab3"></div>
<div class="a t" style="left:1201.30px;width:600px;text-align:center;top:644.00px;font-size:13px;color:#fff;letter-spacing:0.3px;">Sleeping</div>
<div class="a t" style="right:295.30px;top:644.00px;font-size:13px;color:#fff;letter-spacing:0.85px;">00:25:20.4</div>
<div class="a t" style="left:1636.30px;top:641.00px;font-size:13px;color:#fff;letter-spacing:0.55px;">17.7%</div>
<div class="a" style="left:1633px;top:657.5px;width:9.8235px;height:6.8px;background:#4caf50"></div>
<div class="a t" style="left:1692.30px;top:641.00px;font-size:13px;color:#fff;letter-spacing:0.55px;">0.9%</div>
<div class="a" style="left:1689.3px;top:657.5px;width:7.5px;height:6.8px;background:#4caf50"></div>
<div class="a t" style="left:1748.40px;top:644.00px;font-size:13px;color:#fff;letter-spacing:0.42px;">java:com.openn...</div>
<div class="a t" style="right:990.50px;top:680.00px;font-size:13px;color:#c8cbd6;letter-spacing:0.3px;">5</div>
<div class="a t" style="right:916.00px;top:680.00px;font-size:13px;color:#fff;letter-spacing:0.35px;">8,477</div>
<svg class="a" style="left:1012px;top:679.5px;" width="17" height="17" viewBox="0 0 17 17"><circle cx="8.5" cy="8.5" r="7.3" fill="none" stroke="#a6a9b4" stroke-width="1.6"/><circle cx="8.5" cy="5" r="1.2" fill="#d0d2da"/><path d="M6.8,7.3 H9.3 V12.6 M6.6,12.6 H10.6" fill="none" stroke="#d0d2da" stroke-width="1.5"/></svg>
<div class="a t" style="left:1032.40px;top:680.50px;font-size:13px;color:#fff;letter-spacing:0.3px;">rabbitmq</div>
<div class="a t" style="left:1096.60px;top:680.00px;font-size:13px;color:#fff;letter-spacing:0.62px;">2024-07-01 10:03...</div>
<div class="a t" style="right:621.80px;top:680.00px;font-size:13px;color:#fff;letter-spacing:0.3px;">4.5 GB</div>
<div class="a t" style="right:542.40px;top:680.00px;font-size:13px;color:#fff;letter-spacing:0.3px;">243.9 MB</div>
<div class="a t" style="right:464.00px;top:680.00px;font-size:13px;color:#fff;letter-spacing:0.3px;">30.4 MB</div>
<div class="a" style="left:1464px;top:677.7px;width:78px;height:19.4px;background:#9aaab3"></div>
<div class="a t" style="left:1201.30px;width:600px;text-align:center;top:680.00px;font-size:13px;color:#fff;letter-spacing:0.3px;">Sleeping</div>
<div class="a t" style="right:295.30px;top:680.00px;font-size:13px;color:#fff;letter-spacing:0.85px;">04:43:17.6</div>
<div class="a t" style="left:1636.30px;top:677.00px;font-size:13px;color:#fff;letter-spacing:0.55px;">11.8%</div>
<div class="a" style="left:1633px;top:693.5px;width:7.0px;height:6.8px;background:#4caf50"></div>
<div class="a t" style="left:1692.30px;top:677.00px;font-size:13px;color:#fff;letter-spacing:0.55px;">0.8%</div>
<div class="a" style="left:1689.3px;top:693.5px;width:7.5px;height:6.8px;background:#4caf50"></div>
<div class="a t" style="left:1748.40px;top:680.00px;font-size:13px;color:#fff;letter-spacing:0.42px;">/usr/lib64/erlang...</div>
<div class="a t" style="right:990.50px;top:716.00px;font-size:13px;color:#c8cbd6;letter-spacing:0.3px;">6</div>
<div class="a t" style="right:916.00px;top:716.00px;font-size:13px;color:#fff;letter-spacing:0.35px;">9,455</div>
<svg class="a" style="left:1012px;top:715.5px;" width="17" height="17" viewBox="0 0 17 17"><circle cx="8.5" cy="8.5" r="7.3" fill="none" stroke="#a6a9b4" stroke-width="1.6"/><circle cx="8.5" cy="5" r="1.2" fill="#d0d2da"/><path d="M6.8,7.3 H9.3 V12.6 M6.6,12.6 H10.6" fill="none" stroke="#d0d2da" stroke-width="1.5"/></svg>
<div class="a t" style="left:1032.40px;top:716.50px;font-size:13px;color:#fff;letter-spacing:0.3px;">mongod</div>
<div class="a t" style="left:1096.60px;top:716.00px;font-size:13px;color:#fff;letter-spacing:0.62px;">2024-07-01 10:09...</div>
<div class="a t" style="right:621.80px;top:716.00px;font-size:13px;color:#fff;letter-spacing:0.3px;">16.1 GB</div>
<div class="a t" style="right:542.40px;top:716.00px;font-size:13px;color:#fff;letter-spacing:0.3px;">11.1 GB</div>
<div class="a t" style="right:464.00px;top:716.00px;font-size:13px;color:#fff;letter-spacing:0.3px;">23.5 MB</div>
<div class="a" style="left:1464px;top:713.7px;width:78px;height:19.4px;background:#9aaab3"></div>
<div class="a t" style="left:1201.30px;width:600px;text-align:center;top:716.00px;font-size:13px;color:#fff;letter-spacing:0.3px;">Sleeping</div>
<div class="a t" style="right:295.30px;top:716.00px;font-size:13px;color:#fff;letter-spacing:0.85px;">17:37:51.1</div>
<div class="a t" style="left:1636.30px;top:713.00px;font-size:13px;color:#fff;letter-spacing:0.55px;">7.6%</div>
<div class="a" style="left:1633px;top:729.5px;width:7.0px;height:6.8px;background:#4caf50"></div>
<div class="a t" style="left:1692.30px;top:713.00px;font-size:13px;color:#fff;letter-spacing:0.55px;">33.3%</div>
<div class="a" style="left:1689.3px;top:729.5px;width:19px;height:6.8px;background:#ffb300"></div>
<div class="a t" style="left:1748.40px;top:716.00px;font-size:13px;color:#fff;letter-spacing:0.42px;">/usr/bin/mongod</div>
<div class="a t" style="right:990.50px;top:752.00px;font-size:13px;color:#c8cbd6;letter-spacing:0.3px;">7</div>
<div class="a t" style="left:944.20px;top:752.00px;font-size:13px;color:#fff;letter-spacing:0.3px;">2,567,9...</div>
<svg class="a" style="left:1012px;top:751.5px;" width="17" height="17" viewBox="0 0 17 17"><circle cx="8.5" cy="8.5" r="7.3" fill="none" stroke="#a6a9b4" stroke-width="1.6"/><circle cx="8.5" cy="5" r="1.2" fill="#d0d2da"/><path d="M6.8,7.3 H9.3 V12.6 M6.6,12.6 H10.6" fill="none" stroke="#d0d2da" stroke-width="1.5"/></svg>
<div class="a t" style="left:1032.40px;top:752.50px;font-size:13px;color:#fff;letter-spacing:0.3px;">khanap...</div>
<div class="a t" style="left:1096.60px;top:752.00px;font-size:13px;color:#fff;letter-spacing:0.62px;">2024-07-17 19:05...</div>
<div class="a t" style="right:621.80px;top:752.00px;font-size:13px;color:#fff;letter-spacing:0.3px;">13.7 GB</div>
<div class="a t" style="right:542.40px;top:752.00px;font-size:13px;color:#fff;letter-spacing:0.3px;">2.9 GB</div>
<div class="a t" style="right:464.00px;top:752.00px;font-size:13px;color:#fff;letter-spacing:0.3px;">16.7 MB</div>
<div class="a" style="left:1464px;top:749.7px;width:78px;height:19.4px;background:#9aaab3"></div>
<div class="a t" style="left:1201.30px;width:600px;text-align:center;top:752.00px;font-size:13px;color:#fff;letter-spacing:0.3px;">Sleeping</div>
<div class="a t" style="right:295.30px;top:752.00px;font-size:13px;color:#fff;letter-spacing:0.85px;">08:02:54.6</div>
<div class="a t" style="left:1636.30px;top:749.00px;font-size:13px;color:#fff;letter-spacing:0.55px;">5.9%</div>
<div class="a" style="left:1633px;top:765.5px;width:7.0px;height:6.8px;background:#4caf50"></div>
<div class="a t" style="left:1692.30px;top:749.00px;font-size:13px;color:#fff;letter-spacing:0.55px;">8.8%</div>
<div class="a" style="left:1689.3px;top:765.5px;width:7.5px;height:6.8px;background:#4caf50"></div>
<div class="a t" style="left:1748.40px;top:752.00px;font-size:13px;color:#fff;letter-spacing:0.42px;">java:--add-open...</div>
<div class="a t" style="right:990.50px;top:788.00px;font-size:13px;color:#c8cbd6;letter-spacing:0.3px;">8</div>
<div class="a t" style="right:916.00px;top:788.00px;font-size:13px;color:#fff;letter-spacing:0.35px;">1,388</div>
<svg class="a" style="left:1012px;top:787.5px;" width="17" height="17" viewBox="0 0 17 17"><circle cx="8.5" cy="8.5" r="7.3" fill="none" stroke="#a6a9b4" stroke-width="1.6"/><circle cx="8.5" cy="5" r="1.2" fill="#d0d2da"/><path d="M6.8,7.3 H9.3 V12.6 M6.6,12.6 H10.6" fill="none" stroke="#d0d2da" stroke-width="1.5"/></svg>
<div class="a t" style="left:1032.40px;top:788.50px;font-size:13px;color:#fff;letter-spacing:0.3px;">redis</div>
<div class="a t" style="left:1096.60px;top:788.00px;font-size:13px;color:#fff;letter-spacing:0.62px;">2024-07-01 09:46...</div>
<div class="a t" style="right:621.80px;top:788.00px;font-size:13px;color:#fff;letter-spacing:0.3px;">179.3 MB</div>
<div class="a t" style="right:542.40px;top:788.00px;font-size:13px;color:#fff;letter-spacing:0.3px;">44.6 MB</div>
<div class="a t" style="right:464.00px;top:788.00px;font-size:13px;color:#fff;letter-spacing:0.3px;">5.7 MB</div>
<div class="a" style="left:1464px;top:785.7px;width:78px;height:19.4px;background:#9aaab3"></div>
<div class="a t" style="left:1201.30px;width:600px;text-align:center;top:788.00px;font-size:13px;color:#fff;letter-spacing:0.3px;">Sleeping</div>
<div class="a t" style="right:295.30px;top:788.00px;font-size:13px;color:#fff;letter-spacing:0.85px;">10:52:14.5</div>
<div class="a t" style="left:1636.30px;top:785.00px;font-size:13px;color:#fff;letter-spacing:0.55px;">5.0%</div>
<div class="a" style="left:1633px;top:801.5px;width:7.0px;height:6.8px;background:#4caf50"></div>
<div class="a t" style="left:1692.30px;top:785.00px;font-size:13px;color:#fff;letter-spacing:0.55px;">0.2%</div>
<div class="a" style="left:1689.3px;top:801.5px;width:7.5px;height:6.8px;background:#4caf50"></div>
<div class="a t" style="left:1748.40px;top:788.00px;font-size:13px;color:#fff;letter-spacing:0.42px;">/usr/bin/redis-se...</div>
<div class="a t" style="right:990.50px;top:824.00px;font-size:13px;color:#c8cbd6;letter-spacing:0.3px;">9</div>
<div class="a t" style="right:916.00px;top:824.00px;font-size:13px;color:#fff;letter-spacing:0.35px;">972</div>
<svg class="a" style="left:1012px;top:823.5px;" width="17" height="17" viewBox="0 0 17 17"><circle cx="8.5" cy="8.5" r="7.3" fill="none" stroke="#a6a9b4" stroke-width="1.6"/><circle cx="8.5" cy="5" r="1.2" fill="#d0d2da"/><path d="M6.8,7.3 H9.3 V12.6 M6.6,12.6 H10.6" fill="none" stroke="#d0d2da" stroke-width="1.5"/></svg>
<div class="a t" style="left:1032.40px;top:824.50px;font-size:13px;color:#fff;letter-spacing:0.3px;">root</div>
<div class="a t" style="left:1096.60px;top:824.00px;font-size:13px;color:#fff;letter-spacing:0.62px;">2024-07-01 09:46...</div>
<div class="a t" style="right:621.80px;top:824.00px;font-size:13px;color:#fff;letter-spacing:0.3px;">564.0 MB</div>
<div class="a t" style="right:542.40px;top:824.00px;font-size:13px;color:#fff;letter-spacing:0.3px;">41.3 MB</div>
<div class="a t" style="right:464.00px;top:824.00px;font-size:13px;color:#fff;letter-spacing:0.3px;">37.6 MB</div>
<div class="a" style="left:1464px;top:821.7px;width:78px;height:19.4px;background:#9aaab3"></div>
<div class="a t" style="left:1201.30px;width:600px;text-align:center;top:824.00px;font-size:13px;color:#fff;letter-spacing:0.3px;">Sleeping</div>
<div class="a t" style="right:295.30px;top:824.00px;font-size:13px;color:#fff;letter-spacing:0.85px;">03:12:31.2</div>
<div class="a t" style="left:1636.30px;top:821.00px;font-size:13px;color:#fff;letter-spacing:0.55px;">2.5%</div>
<div class="a" style="left:1633px;top:837.5px;width:7.0px;height:6.8px;background:#4caf50"></div>
<div class="a t" style="left:1692.30px;top:821.00px;font-size:13px;color:#fff;letter-spacing:0.55px;">0.2%</div>
<div class="a" style="left:1689.3px;top:837.5px;width:7.5px;height:6.8px;background:#4caf50"></div>
<div class="a t" style="left:1748.40px;top:824.00px;font-size:13px;color:#fff;letter-spacing:0.42px;">/usr/sbin/rsyslogd</div>
<div class="a t" style="right:990.50px;top:860.00px;font-size:13px;color:#c8cbd6;letter-spacing:0.3px;">10</div>
<div class="a t" style="right:916.00px;top:860.00px;font-size:13px;color:#fff;letter-spacing:0.35px;">9,684</div>
<svg class="a" style="left:1012px;top:859.5px;" width="17" height="17" viewBox="0 0 17 17"><circle cx="8.5" cy="8.5" r="7.3" fill="none" stroke="#a6a9b4" stroke-width="1.6"/><circle cx="8.5" cy="5" r="1.2" fill="#d0d2da"/><path d="M6.8,7.3 H9.3 V12.6 M6.6,12.6 H10.6" fill="none" stroke="#d0d2da" stroke-width="1.5"/></svg>
<div class="a t" style="left:1032.40px;top:860.50px;font-size:13px;color:#fff;letter-spacing:0.3px;">haproxy</div>
<div class="a t" style="left:1096.60px;top:860.00px;font-size:13px;color:#fff;letter-spacing:0.62px;">2024-07-01 10:09...</div>
<div class="a t" style="right:621.80px;top:860.00px;font-size:13px;color:#fff;letter-spacing:0.3px;">552.9 MB</div>
<div class="a t" style="right:542.40px;top:860.00px;font-size:13px;color:#fff;letter-spacing:0.3px;">15.6 MB</div>
<div class="a t" style="right:464.00px;top:860.00px;font-size:13px;color:#fff;letter-spacing:0.3px;">2.6 MB</div>
<div class="a" style="left:1464px;top:857.7px;width:78px;height:19.4px;background:#9aaab3"></div>
<div class="a t" style="left:1201.30px;width:600px;text-align:center;top:860.00px;font-size:13px;color:#fff;letter-spacing:0.3px;">Sleeping</div>
<div class="a t" style="right:295.30px;top:860.00px;font-size:13px;color:#fff;letter-spacing:0.85px;">12:51:40.8</div>
<div class="a t" style="left:1636.30px;top:857.00px;font-size:13px;color:#fff;letter-spacing:0.55px;">2.5%</div>
<div class="a" style="left:1633px;top:873.5px;width:7.0px;height:6.8px;background:#4caf50"></div>
<div class="a t" style="left:1692.30px;top:857.00px;font-size:13px;color:#fff;letter-spacing:0.55px;">0.1%</div>
<div class="a" style="left:1689.3px;top:873.5px;width:7.5px;height:6.8px;background:#4caf50"></div>
<div class="a t" style="left:1748.40px;top:860.00px;font-size:13px;color:#fff;letter-spacing:0.42px;">/usr/sbin/haproxy</div>
<div class="a t" style="right:990.50px;top:896.00px;font-size:13px;color:#c8cbd6;letter-spacing:0.3px;">11</div>
<div class="a t" style="right:916.00px;top:896.00px;font-size:13px;color:#fff;letter-spacing:0.35px;">18</div>
<svg class="a" style="left:1012px;top:895.5px;" width="17" height="17" viewBox="0 0 17 17"><circle cx="8.5" cy="8.5" r="7.3" fill="none" stroke="#a6a9b4" stroke-width="1.6"/><circle cx="8.5" cy="5" r="1.2" fill="#d0d2da"/><path d="M6.8,7.3 H9.3 V12.6 M6.6,12.6 H10.6" fill="none" stroke="#d0d2da" stroke-width="1.5"/></svg>
<div class="a t" style="left:1032.40px;top:896.50px;font-size:13px;color:#fff;letter-spacing:0.3px;">root</div>
<div class="a t" style="left:1096.60px;top:896.00px;font-size:13px;color:#fff;letter-spacing:0.62px;">2024-07-01 09:45...</div>
<div class="a t" style="right:621.80px;top:896.00px;font-size:13px;color:#fff;letter-spacing:0.3px;">0 Byte</div>
<div class="a t" style="right:542.40px;top:896.00px;font-size:13px;color:#fff;letter-spacing:0.3px;">0 Byte</div>
<div class="a t" style="right:464.00px;top:896.00px;font-size:13px;color:#fff;letter-spacing:0.3px;">0 Byte</div>
<div class="a" style="left:1464px;top:893.7px;width:78px;height:19.4px;background:#9aaab3"></div>
<div class="a t" style="left:1201.30px;width:600px;text-align:center;top:896.00px;font-size:13px;color:#fff;letter-spacing:0.3px;">Idle</div>
<div class="a t" style="right:295.30px;top:896.00px;font-size:13px;color:#fff;letter-spacing:0.85px;">01:18:04.4</div>
<div class="a t" style="left:1636.30px;top:893.00px;font-size:13px;color:#fff;letter-spacing:0.55px;">0.8%</div>
<div class="a" style="left:1633px;top:909.5px;width:7.0px;height:6.8px;background:#4caf50"></div>
<div class="a t" style="left:1692.30px;top:893.00px;font-size:13px;color:#fff;letter-spacing:0.55px;">0.0%</div>
<div class="a" style="left:1689.3px;top:909.5px;width:7.5px;height:6.8px;background:#4caf50"></div>
<div class="a t" style="left:1748.40px;top:896.00px;font-size:13px;color:#fff;letter-spacing:0.42px;">rcu_preempt</div>
<div class="a t" style="right:990.50px;top:932.00px;font-size:13px;color:#c8cbd6;letter-spacing:0.3px;">12</div>
<div class="a t" style="right:916.00px;top:932.00px;font-size:13px;color:#fff;letter-spacing:0.35px;">372</div>
<svg class="a" style="left:1012px;top:931.5px;" width="17" height="17" viewBox="0 0 17 17"><circle cx="8.5" cy="8.5" r="7.3" fill="none" stroke="#a6a9b4" stroke-width="1.6"/><circle cx="8.5" cy="5" r="1.2" fill="#d0d2da"/><path d="M6.8,7.3 H9.3 V12.6 M6.6,12.6 H10.6" fill="none" stroke="#d0d2da" stroke-width="1.5"/></svg>
<div class="a t" style="left:1032.40px;top:932.50px;font-size:13px;color:#fff;letter-spacing:0.3px;">root</div>
<div class="a t" style="left:1096.60px;top:932.00px;font-size:13px;color:#fff;letter-spacing:0.62px;">2024-07-01 09:45...</div>
<div class="a t" style="right:621.80px;top:932.00px;font-size:13px;color:#fff;letter-spacing:0.3px;">0 Byte</div>
<div class="a t" style="right:542.40px;top:932.00px;font-size:13px;color:#fff;letter-spacing:0.3px;">0 Byte</div>
<div class="a t" style="right:464.00px;top:932.00px;font-size:13px;color:#fff;letter-spacing:0.3px;">0 Byte</div>
<div class="a" style="left:1464px;top:929.7px;width:78px;height:19.4px;background:#9aaab3"></div>
<div class="a t" style="left:1201.30px;width:600px;text-align:center;top:932.00px;font-size:13px;color:#fff;letter-spacing:0.3px;">Idle</div>
<div class="a t" style="right:295.30px;top:932.00px;font-size:13px;color:#fff;letter-spacing:0.85px;">01:06:30.1</div>
<div class="a t" style="left:1636.30px;top:929.00px;font-size:13px;color:#fff;letter-spacing:0.55px;">0.8%</div>
<div class="a" style="left:1633px;top:945.5px;width:7.0px;height:6.8px;background:#4caf50"></div>
<div class="a t" style="left:1692.30px;top:929.00px;font-size:13px;color:#fff;letter-spacing:0.55px;">0.0%</div>
<div class="a" style="left:1689.3px;top:945.5px;width:7.5px;height:6.8px;background:#4caf50"></div>
<div class="a t" style="left:1748.40px;top:932.00px;font-size:13px;color:#fff;letter-spacing:0.42px;">kworker/14:1H-...</div>
<div class="a t" style="right:990.50px;top:968.00px;font-size:13px;color:#c8cbd6;letter-spacing:0.3px;">13</div>
<div class="a t" style="right:916.00px;top:968.00px;font-size:13px;color:#fff;letter-spacing:0.35px;">538</div>
<svg class="a" style="left:1012px;top:967.5px;" width="17" height="17" viewBox="0 0 17 17"><circle cx="8.5" cy="8.5" r="7.3" fill="none" stroke="#a6a9b4" stroke-width="1.6"/><circle cx="8.5" cy="5" r="1.2" fill="#d0d2da"/><path d="M6.8,7.3 H9.3 V12.6 M6.6,12.6 H10.6" fill="none" stroke="#d0d2da" stroke-width="1.5"/></svg>
<div class="a t" style="left:1032.40px;top:968.50px;font-size:13px;color:#fff;letter-spacing:0.3px;">root</div>
<div class="a t" style="left:1096.60px;top:968.00px;font-size:13px;color:#fff;letter-spacing:0.62px;">2024-07-01 09:46...</div>
<div class="a t" style="right:621.80px;top:968.00px;font-size:13px;color:#fff;letter-spacing:0.3px;">0 Byte</div>
<div class="a t" style="right:542.40px;top:968.00px;font-size:13px;color:#fff;letter-spacing:0.3px;">0 Byte</div>
<div class="a t" style="right:464.00px;top:968.00px;font-size:13px;color:#fff;letter-spacing:0.3px;">0 Byte</div>
<div class="a" style="left:1464px;top:965.7px;width:78px;height:19.4px;background:#9aaab3"></div>
<div class="a t" style="left:1201.30px;width:600px;text-align:center;top:968.00px;font-size:13px;color:#fff;letter-spacing:0.3px;">Idle</div>
<div class="a t" style="right:295.30px;top:968.00px;font-size:13px;color:#fff;letter-spacing:0.85px;">01:11:02.6</div>
<div class="a t" style="left:1636.30px;top:965.00px;font-size:13px;color:#fff;letter-spacing:0.55px;">0.8%</div>
<div class="a" style="left:1633px;top:981.5px;width:7.0px;height:6.8px;background:#4caf50"></div>
<div class="a t" style="left:1692.30px;top:965.00px;font-size:13px;color:#fff;letter-spacing:0.55px;">0.0%</div>
<div class="a" style="left:1689.3px;top:981.5px;width:7.5px;height:6.8px;background:#4caf50"></div>
<div class="a t" style="left:1748.40px;top:968.00px;font-size:13px;color:#fff;letter-spacing:0.42px;">kworker/8:1H-xf...</div>
<div class="a t" style="right:990.50px;top:1004.00px;font-size:13px;color:#c8cbd6;letter-spacing:0.3px;">14</div>
<div class="a t" style="right:916.00px;top:1004.00px;font-size:13px;color:#fff;letter-spacing:0.35px;">570</div>
<svg class="a" style="left:1012px;top:1003.5px;" width="17" height="17" viewBox="0 0 17 17"><circle cx="8.5" cy="8.5" r="7.3" fill="none" stroke="#a6a9b4" stroke-width="1.6"/><circle cx="8.5" cy="5" r="1.2" fill="#d0d2da"/><path d="M6.8,7.3 H9.3 V12.6 M6.6,12.6 H10.6" fill="none" stroke="#d0d2da" stroke-width="1.5"/></svg>
<div class="a t" style="left:1032.40px;top:1004.50px;font-size:13px;color:#fff;letter-spacing:0.3px;">root</div>
<div class="a t" style="left:1096.60px;top:1004.00px;font-size:13px;color:#fff;letter-spacing:0.62px;">2024-07-01 09:46...</div>
<div class="a t" style="right:621.80px;top:1004.00px;font-size:13px;color:#fff;letter-spacing:0.3px;">0 Byte</div>
<div class="a t" style="right:542.40px;top:1004.00px;font-size:13px;color:#fff;letter-spacing:0.3px;">0 Byte</div>
<div class="a t" style="right:464.00px;top:1004.00px;font-size:13px;color:#fff;letter-spacing:0.3px;">0 Byte</div>
<div class="a" style="left:1464px;top:1001.7px;width:78px;height:19.4px;background:#9aaab3"></div>
<div class="a t" style="left:1201.30px;width:600px;text-align:center;top:1004.00px;font-size:13px;color:#fff;letter-spacing:0.3px;">Idle</div>
<div class="a t" style="right:295.30px;top:1004.00px;font-size:13px;color:#fff;letter-spacing:0.85px;">01:07:27.5</div>
<div class="a t" style="left:1636.30px;top:1001.00px;font-size:13px;color:#fff;letter-spacing:0.55px;">0.8%</div>
<div class="a" style="left:1633px;top:1017.5px;width:7.0px;height:6.8px;background:#4caf50"></div>
<div class="a t" style="left:1692.30px;top:1001.00px;font-size:13px;color:#fff;letter-spacing:0.55px;">0.0%</div>
<div class="a" style="left:1689.3px;top:1017.5px;width:7.5px;height:6.8px;background:#4caf50"></div>
<div class="a t" style="left:1748.40px;top:1004.00px;font-size:13px;color:#fff;letter-spacing:0.42px;">kworker/11:1H-...</div>
<div class="a t" style="right:990.50px;top:1040.00px;font-size:13px;color:#c8cbd6;letter-spacing:0.3px;">15</div>
<div class="a t" style="right:916.00px;top:1040.00px;font-size:13px;color:#fff;letter-spacing:0.35px;">767</div>
<svg class="a" style="left:1012px;top:1039.5px;" width="17" height="17" viewBox="0 0 17 17"><circle cx="8.5" cy="8.5" r="7.3" fill="none" stroke="#a6a9b4" stroke-width="1.6"/><circle cx="8.5" cy="5" r="1.2" fill="#d0d2da"/><path d="M6.8,7.3 H9.3 V12.6 M6.6,12.6 H10.6" fill="none" stroke="#d0d2da" stroke-width="1.5"/></svg>
<div class="a t" style="left:1032.40px;top:1040.50px;font-size:13px;color:#fff;letter-spacing:0.3px;">root</div>
<div class="a t" style="left:1096.60px;top:1040.00px;font-size:13px;color:#fff;letter-spacing:0.62px;">2024-07-01 09:46...</div>
<div class="a t" style="right:621.80px;top:1040.00px;font-size:13px;color:#fff;letter-spacing:0.3px;">325.3 MB</div>
<div class="a t" style="right:542.40px;top:1040.00px;font-size:13px;color:#fff;letter-spacing:0.3px;">184.7 MB</div>
<div class="a t" style="right:464.00px;top:1040.00px;font-size:13px;color:#fff;letter-spacing:0.3px;">183.5 MB</div>
<div class="a" style="left:1464px;top:1037.7px;width:78px;height:19.4px;background:#9aaab3"></div>
<div class="a t" style="left:1201.30px;width:600px;text-align:center;top:1040.00px;font-size:13px;color:#fff;letter-spacing:0.3px;">Sleeping</div>
<div class="a t" style="right:295.30px;top:1040.00px;font-size:13px;color:#fff;letter-spacing:0.85px;">03:02:32.5</div>
<div class="a t" style="left:1636.30px;top:1037.00px;font-size:13px;color:#fff;letter-spacing:0.55px;">0.8%</div>
<div class="a" style="left:1633px;top:1053.5px;width:7.0px;height:6.8px;background:#4caf50"></div>
<div class="a t" style="left:1692.30px;top:1037.00px;font-size:13px;color:#fff;letter-spacing:0.55px;">1.1%</div>
<div class="a" style="left:1689.3px;top:1053.5px;width:7.5px;height:6.8px;background:#4caf50"></div>
<div class="a t" style="left:1748.40px;top:1040.00px;font-size:13px;color:#fff;letter-spacing:0.42px;">/usr/lib/systemd...</div>
<div class="a" style="left:1868.5px;top:525px;width:9.5px;height:550px;background:#2a3048"></div>
<div class="a" style="left:1868.5px;top:526px;width:9.5px;height:29px;background:linear-gradient(90deg,#5a6078 0,#2b3048 22%,#222740 50%,#2b3048 78%,#5a6078 100%);border-radius:5px"></div>
<div class="a" style="left:901px;top:1067px;width:968px;height:7px;background:linear-gradient(180deg,rgba(60,66,100,0) 0,rgba(60,66,100,0.55) 100%)"></div>
<div class="a" style="left:901px;top:1074px;width:968px;height:1.5px;background:#3b4266"></div>
</body></html>
